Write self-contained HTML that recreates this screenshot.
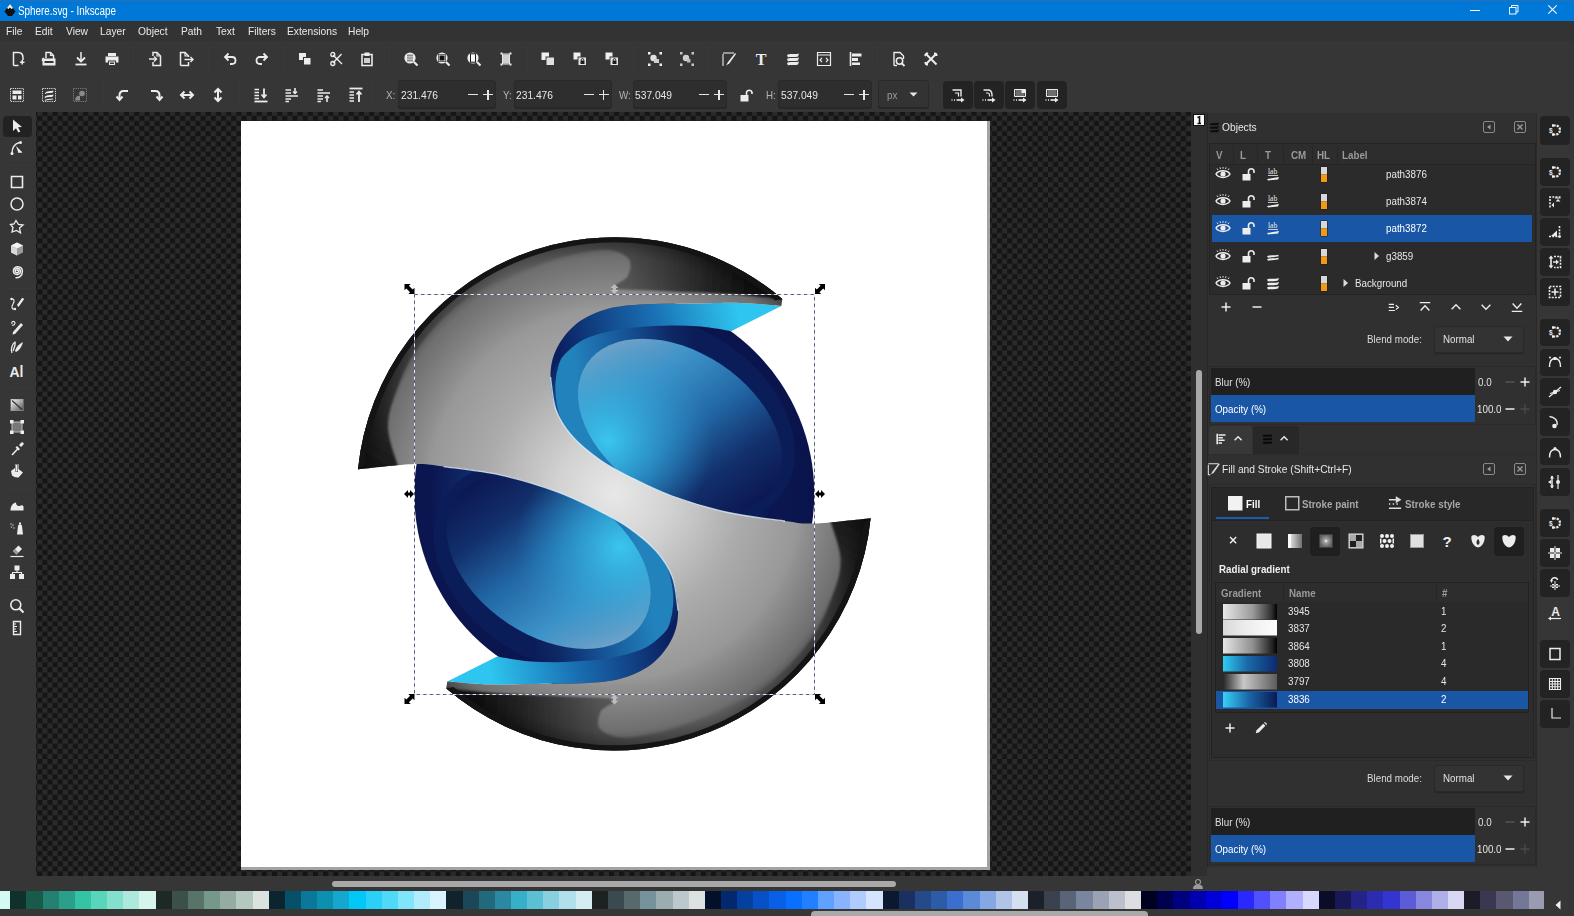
<!DOCTYPE html>
<html><head><meta charset="utf-8"><style>
html,body{margin:0;padding:0;}
body{width:1574px;height:916px;overflow:hidden;position:relative;background:#363636;font-family:"Liberation Sans",sans-serif;}
body div, body svg{position:absolute;box-sizing:border-box;}
svg{overflow:visible}
</style></head><body>
<div style="left:0px;top:0px;width:1574px;height:21px;background:#0078d7;"></div>
<div style="left:0px;top:0px;width:1574px;height:1px;background:#2a6fb6;"></div>
<svg style="left:3px;top:3px;" width="14" height="15" viewBox="0 0 14 15"><path d="M7 1 L12.5 8.5 L9 13 L5 13 L1.5 8.5 Z" fill="#111"/><path d="M7 1 L10 5 L8.5 6 L7 4.5 L5.5 6 L4 5 Z" fill="#f4f4f4"/></svg>
<div style="left:18px;top:0.50px;height:20px;line-height:20px;font-size:12px;color:#ffffff;font-weight:normal;white-space:nowrap;transform:scaleX(0.82);transform-origin:0 50%;">Sphere.svg - Inkscape</div>
<div style="left:1470px;top:10px;width:10px;height:1px;background:#ffffff;"></div>
<svg style="left:1509px;top:5px;" width="10" height="10" viewBox="0 0 10 10"><rect x="0.5" y="2.5" width="6.5" height="6.5" fill="none" stroke="#f4f8ff"/><path d="M2.5 2.5 V0.5 H9 V7 H7" fill="none" stroke="#f4f8ff"/></svg>
<svg style="left:1548px;top:5px;" width="9" height="9" viewBox="0 0 9 9"><path d="M0.3 0.3 L8.7 8.7 M8.7 0.3 L0.3 8.7" stroke="#f4f8ff" stroke-width="1.2"/></svg>
<div style="left:0px;top:21px;width:1574px;height:20px;background:#333333;"></div>
<div style="left:6px;top:20.50px;height:20px;line-height:20px;font-size:11.5px;color:#e8e8e8;font-weight:normal;white-space:nowrap;transform:scaleX(0.89);transform-origin:0 50%;">File</div>
<div style="left:35px;top:20.50px;height:20px;line-height:20px;font-size:11.5px;color:#e8e8e8;font-weight:normal;white-space:nowrap;transform:scaleX(0.89);transform-origin:0 50%;">Edit</div>
<div style="left:65.5px;top:20.50px;height:20px;line-height:20px;font-size:11.5px;color:#e8e8e8;font-weight:normal;white-space:nowrap;transform:scaleX(0.89);transform-origin:0 50%;">View</div>
<div style="left:100px;top:20.50px;height:20px;line-height:20px;font-size:11.5px;color:#e8e8e8;font-weight:normal;white-space:nowrap;transform:scaleX(0.89);transform-origin:0 50%;">Layer</div>
<div style="left:137.5px;top:20.50px;height:20px;line-height:20px;font-size:11.5px;color:#e8e8e8;font-weight:normal;white-space:nowrap;transform:scaleX(0.89);transform-origin:0 50%;">Object</div>
<div style="left:181px;top:20.50px;height:20px;line-height:20px;font-size:11.5px;color:#e8e8e8;font-weight:normal;white-space:nowrap;transform:scaleX(0.89);transform-origin:0 50%;">Path</div>
<div style="left:215.5px;top:20.50px;height:20px;line-height:20px;font-size:11.5px;color:#e8e8e8;font-weight:normal;white-space:nowrap;transform:scaleX(0.89);transform-origin:0 50%;">Text</div>
<div style="left:247.5px;top:20.50px;height:20px;line-height:20px;font-size:11.5px;color:#e8e8e8;font-weight:normal;white-space:nowrap;transform:scaleX(0.89);transform-origin:0 50%;">Filters</div>
<div style="left:287px;top:20.50px;height:20px;line-height:20px;font-size:11.5px;color:#e8e8e8;font-weight:normal;white-space:nowrap;transform:scaleX(0.89);transform-origin:0 50%;">Extensions</div>
<div style="left:348px;top:20.50px;height:20px;line-height:20px;font-size:11.5px;color:#e8e8e8;font-weight:normal;white-space:nowrap;transform:scaleX(0.89);transform-origin:0 50%;">Help</div>
<div style="left:0px;top:41px;width:1574px;height:71px;background:#363636;"></div>
<div style="left:0px;top:112px;width:36px;height:764px;background:#363636;"></div>
<svg style="left:36px;top:112px" width="1155" height="764" viewBox="36 112 1155 764"><defs><pattern id="chk" x="37.2" y="115.8" width="10.21" height="10.21" patternUnits="userSpaceOnUse"><rect width="10.21" height="10.21" fill="#151515"/><rect x="5.105" y="0" width="5.105" height="5.105" fill="#2a2a2a"/><rect x="0" y="5.105" width="5.105" height="5.105" fill="#2a2a2a"/></pattern></defs><rect x="36" y="112" width="1155" height="764" fill="url(#chk)"/></svg>
<div style="left:241px;top:121px;width:749px;height:749px;background:#ffffff;border-right:3px solid #a3a3a3;border-bottom:3px solid #a3a3a3;"></div>
<svg style="left:0px;top:0px" width="1574" height="916" viewBox="0 0 1574 916"><defs><clipPath id="cvclip"><rect x="36" y="112" width="1155" height="764"/></clipPath><clipPath id="sph"><circle cx="614.3" cy="493.8" r="200.0"/></clipPath><radialGradient id="gSph" gradientUnits="userSpaceOnUse" cx="600" cy="500" r="250"><stop offset="0" stop-color="#3fc6ee"/><stop offset="0.18" stop-color="#2aa2d6"/><stop offset="0.36" stop-color="#1b62a2"/><stop offset="0.52" stop-color="#0f2c6c"/><stop offset="0.68" stop-color="#0b1650"/><stop offset="1" stop-color="#0a1248"/></radialGradient><radialGradient id="gGray" gradientUnits="userSpaceOnUse" cx="614.3" cy="493.8" r="258.0"><stop offset="0" stop-color="#e8e8e8"/><stop offset="0.22" stop-color="#d2d2d2"/><stop offset="0.5" stop-color="#ababab"/><stop offset="0.75" stop-color="#959595"/><stop offset="1" stop-color="#8a8a8a"/></radialGradient><radialGradient id="gCap" gradientUnits="userSpaceOnUse" cx="500" cy="262" r="300"><stop offset="0" stop-color="#8a8a8a"/><stop offset="0.45" stop-color="#5a5a5a"/><stop offset="0.7" stop-color="#2a2a2a"/><stop offset="0.85" stop-color="#151515"/><stop offset="1" stop-color="#0a0a0a"/></radialGradient><linearGradient id="gTip" gradientUnits="userSpaceOnUse" x1="358" y1="470" x2="430" y2="430"><stop offset="0" stop-color="#0a0a0a"/><stop offset="0.6" stop-color="#444" stop-opacity="0.6"/><stop offset="1" stop-color="#777" stop-opacity="0"/></linearGradient><linearGradient id="gLip" gradientUnits="userSpaceOnUse" x1="740" y1="320" x2="560" y2="360"><stop offset="0" stop-color="#2ec6f0"/><stop offset="0.45" stop-color="#1a70b4"/><stop offset="1" stop-color="#0a1f60"/></linearGradient><linearGradient id="gRing" gradientUnits="userSpaceOnUse" x1="552" y1="420" x2="640" y2="335"><stop offset="0" stop-color="#2282bc"/><stop offset="0.45" stop-color="#165496"/><stop offset="0.8" stop-color="#0e2a68"/><stop offset="1" stop-color="#0b1d58"/></linearGradient><linearGradient id="gInner" gradientUnits="userSpaceOnUse" x1="570" y1="370" x2="790" y2="450"><stop offset="0" stop-color="#84a8c8"/><stop offset="0.3" stop-color="#3c92c8"/><stop offset="0.55" stop-color="#2268a6"/><stop offset="0.78" stop-color="#12306c"/><stop offset="1" stop-color="#0b1650"/></linearGradient><radialGradient id="gInCy" gradientUnits="userSpaceOnUse" cx="628" cy="478" r="105"><stop offset="0" stop-color="#3ac6ee" stop-opacity="1"/><stop offset="0.5" stop-color="#30a8da" stop-opacity="0.55"/><stop offset="1" stop-color="#2a90c8" stop-opacity="0"/></radialGradient><radialGradient id="gHi" gradientUnits="userSpaceOnUse" cx="614" cy="494" r="120"><stop offset="0" stop-color="#ececec" stop-opacity="0.9"/><stop offset="1" stop-color="#d0d0d0" stop-opacity="0"/></radialGradient><radialGradient id="gDark" gradientUnits="userSpaceOnUse" cx="614.3" cy="493.8" r="258.0"><stop offset="0.72" stop-color="#000" stop-opacity="0"/><stop offset="0.92" stop-color="#000" stop-opacity="0.22"/><stop offset="1" stop-color="#000" stop-opacity="0.55"/></radialGradient><filter id="fblur" x="-10%" y="-10%" width="120%" height="120%"><feGaussianBlur stdDeviation="1.1"/></filter><clipPath id="grayclip"><path d="M358.0,469.4 A258.0,258.0 0 0 1 782.3,299.0 L781.3,306.0 C774.4,305.5 753.5,303.4 740.0,303.0 C726.5,302.6 716.7,303.2 700.0,303.5 C683.3,303.8 656.0,303.4 640.0,304.5 C624.0,305.6 614.8,306.6 604.0,310.0 C593.2,313.4 583.0,318.3 575.0,325.0 C567.0,331.7 560.1,341.3 556.0,350.0 C551.9,358.7 550.5,367.0 550.5,377.0 C550.5,387.0 552.4,400.2 556.0,410.0 C559.6,419.8 564.7,427.7 572.0,436.0 C579.3,444.3 590.3,453.2 600.0,460.0 C609.7,466.8 618.0,471.0 630.0,477.0 C642.0,483.0 655.7,490.1 672.0,496.0 C688.3,501.9 709.2,508.3 728.0,512.5 C746.8,516.7 770.7,519.2 785.0,521.0 C799.3,522.8 799.7,524.0 814.0,523.5 C828.3,523.0 861.2,519.1 870.6,518.2 A258.0,258.0 0 0 1 446.3,688.6 L447.3,681.6 C454.2,682.1 475.0,684.2 488.6,684.6 C502.1,685.0 511.9,684.4 528.6,684.1 C545.3,683.9 572.6,684.2 588.6,683.1 C604.6,682.0 613.8,681.0 624.6,677.6 C635.4,674.2 645.6,669.3 653.6,662.6 C661.6,655.9 668.5,646.3 672.6,637.6 C676.7,628.9 678.1,620.6 678.1,610.6 C678.1,600.6 676.2,587.4 672.6,577.6 C669.0,567.8 663.9,559.9 656.6,551.6 C649.3,543.3 638.3,534.4 628.6,527.6 C618.9,520.8 610.6,516.6 598.6,510.6 C586.6,504.6 572.9,497.5 556.6,491.6 C540.3,485.7 519.4,479.3 500.6,475.1 C481.8,470.9 457.9,468.4 443.6,466.6 C429.3,464.8 428.9,463.6 414.6,464.1 C400.3,464.6 367.4,468.5 358.0,469.4 Z"/></clipPath></defs><g clip-path="url(#cvclip)"><circle cx="614.3" cy="493.8" r="200.0" fill="url(#gSph)"/><g id="halfA"><g clip-path="url(#sph)"><ellipse cx="675" cy="420" rx="130" ry="92" transform="rotate(33.5 675 420)" fill="url(#gRing)"/><ellipse cx="680" cy="426" rx="112" ry="74" transform="rotate(33.5 680 426)" fill="url(#gInner)"/><ellipse cx="680" cy="426" rx="112" ry="74" transform="rotate(33.5 680 426)" fill="url(#gInCy)"/></g><path d="M731.5,331 L781.3,306 C774.4,305.5 753.5,303.4 740.0,303.0 C726.5,302.6 716.7,303.2 700.0,303.5 C683.3,303.8 656.0,303.4 640.0,304.5 C624.0,305.6 614.8,306.6 604.0,310.0 C593.2,313.4 583.0,318.3 575.0,325.0 C567.0,331.7 560.1,341.3 556.0,350.0 C551.9,358.7 551.4,372.5 550.5,377.0 C551.8,374.5 552.9,368.0 558.0,362.0 C563.1,356.0 571.5,346.3 581.0,341.0 C590.5,335.7 605.2,332.3 615.0,330.0 C624.8,327.7 630.8,327.8 640.0,327.0 C649.2,326.2 660.3,325.5 670.5,325.4 C680.7,325.3 690.8,325.5 701.0,326.4 C711.2,327.3 726.4,330.2 731.5,331.0 Z" fill="url(#gLip)"/></g><use href="#halfA" transform="rotate(180 614.3 493.8)"/><path d="M358.0,469.4 A258.0,258.0 0 0 1 782.3,299.0 L781.3,306.0 C774.4,305.5 753.5,303.4 740.0,303.0 C726.5,302.6 716.7,303.2 700.0,303.5 C683.3,303.8 656.0,303.4 640.0,304.5 C624.0,305.6 614.8,306.6 604.0,310.0 C593.2,313.4 583.0,318.3 575.0,325.0 C567.0,331.7 560.1,341.3 556.0,350.0 C551.9,358.7 550.5,367.0 550.5,377.0 C550.5,387.0 552.4,400.2 556.0,410.0 C559.6,419.8 564.7,427.7 572.0,436.0 C579.3,444.3 590.3,453.2 600.0,460.0 C609.7,466.8 618.0,471.0 630.0,477.0 C642.0,483.0 655.7,490.1 672.0,496.0 C688.3,501.9 709.2,508.3 728.0,512.5 C746.8,516.7 770.7,519.2 785.0,521.0 C799.3,522.8 799.7,524.0 814.0,523.5 C828.3,523.0 861.2,519.1 870.6,518.2 A258.0,258.0 0 0 1 446.3,688.6 L447.3,681.6 C454.2,682.1 475.0,684.2 488.6,684.6 C502.1,685.0 511.9,684.4 528.6,684.1 C545.3,683.9 572.6,684.2 588.6,683.1 C604.6,682.0 613.8,681.0 624.6,677.6 C635.4,674.2 645.6,669.3 653.6,662.6 C661.6,655.9 668.5,646.3 672.6,637.6 C676.7,628.9 678.1,620.6 678.1,610.6 C678.1,600.6 676.2,587.4 672.6,577.6 C669.0,567.8 663.9,559.9 656.6,551.6 C649.3,543.3 638.3,534.4 628.6,527.6 C618.9,520.8 610.6,516.6 598.6,510.6 C586.6,504.6 572.9,497.5 556.6,491.6 C540.3,485.7 519.4,479.3 500.6,475.1 C481.8,470.9 457.9,468.4 443.6,466.6 C429.3,464.8 428.9,463.6 414.6,464.1 C400.3,464.6 367.4,468.5 358.0,469.4 Z" fill="url(#gGray)"/><g id="hlA"><path d="M550.5,377.0 C551.4,382.5 552.4,400.2 556.0,410.0 C559.6,419.8 564.7,427.7 572.0,436.0 C579.3,444.3 590.3,453.2 600.0,460.0 C609.7,466.8 618.0,471.0 630.0,477.0 C642.0,483.0 655.7,490.1 672.0,496.0 C688.3,501.9 709.2,508.3 728.0,512.5 C746.8,516.7 775.5,519.6 785.0,521.0" fill="none" stroke="#eaf6ff" stroke-width="1.3" stroke-opacity="0.75"/></g><use href="#hlA" transform="rotate(180 614.3 493.8)"/><g clip-path="url(#grayclip)"><g id="halfB"><path d="M352.0,472.4 L349.5,468.6 A266.0,266.0 0 0 1 788.0,292.4 L788.3,303.0 L782.3,299.0 C779.4,298.7 775.4,297.9 765.0,297.0 C754.6,296.1 737.5,294.5 720.0,293.5 C702.5,292.5 677.5,291.9 660.0,291.0 C642.5,290.1 620.3,290.5 615.0,288.0 C609.7,285.5 625.8,281.0 628.0,276.0 C630.2,271.0 632.7,262.3 628.0,258.0 C623.3,253.7 614.7,249.0 600.0,250.0 C585.3,251.0 562.0,256.0 540.0,264.0 C518.0,272.0 488.0,284.5 468.0,298.0 C448.0,311.5 432.0,329.3 420.0,345.0 C408.0,360.7 401.3,378.2 396.0,392.0 C390.7,405.8 387.7,415.7 388.0,428.0 C388.3,440.3 396.3,459.7 398.0,466.0 L398.0,474.0 Z" fill="url(#gCap)" filter="url(#fblur)"/></g><use href="#halfB" transform="rotate(180 614.3 493.8)"/></g><path d="M358.0,469.4 A258.0,258.0 0 0 1 782.3,299.0 L781.3,306.0 C774.4,305.5 753.5,303.4 740.0,303.0 C726.5,302.6 716.7,303.2 700.0,303.5 C683.3,303.8 656.0,303.4 640.0,304.5 C624.0,305.6 614.8,306.6 604.0,310.0 C593.2,313.4 583.0,318.3 575.0,325.0 C567.0,331.7 560.1,341.3 556.0,350.0 C551.9,358.7 550.5,367.0 550.5,377.0 C550.5,387.0 552.4,400.2 556.0,410.0 C559.6,419.8 564.7,427.7 572.0,436.0 C579.3,444.3 590.3,453.2 600.0,460.0 C609.7,466.8 618.0,471.0 630.0,477.0 C642.0,483.0 655.7,490.1 672.0,496.0 C688.3,501.9 709.2,508.3 728.0,512.5 C746.8,516.7 770.7,519.2 785.0,521.0 C799.3,522.8 799.7,524.0 814.0,523.5 C828.3,523.0 861.2,519.1 870.6,518.2 A258.0,258.0 0 0 1 446.3,688.6 L447.3,681.6 C454.2,682.1 475.0,684.2 488.6,684.6 C502.1,685.0 511.9,684.4 528.6,684.1 C545.3,683.9 572.6,684.2 588.6,683.1 C604.6,682.0 613.8,681.0 624.6,677.6 C635.4,674.2 645.6,669.3 653.6,662.6 C661.6,655.9 668.5,646.3 672.6,637.6 C676.7,628.9 678.1,620.6 678.1,610.6 C678.1,600.6 676.2,587.4 672.6,577.6 C669.0,567.8 663.9,559.9 656.6,551.6 C649.3,543.3 638.3,534.4 628.6,527.6 C618.9,520.8 610.6,516.6 598.6,510.6 C586.6,504.6 572.9,497.5 556.6,491.6 C540.3,485.7 519.4,479.3 500.6,475.1 C481.8,470.9 457.9,468.4 443.6,466.6 C429.3,464.8 428.9,463.6 414.6,464.1 C400.3,464.6 367.4,468.5 358.0,469.4 Z" fill="url(#gDark)"/><g id="rimA"><path d="M358.0,469.4 A258.0,258.0 0 0 1 782.3,299.0 L775.2,300.5 A251.5,251.5 0 0 0 364.4,465.6 Z" fill="#141414"/></g><use href="#rimA" transform="rotate(180 614.3 493.8)"/></g></svg>
<div style="left:1191px;top:112px;width:16px;height:764px;background:#2f2f2f;"></div>
<svg style="left:1193px;top:114px;" width="12" height="12" viewBox="0 0 12 12"><rect x="0.5" y="0.5" width="11" height="11" fill="#fafafa" stroke="#111"/><path d="M4.5 3.5 L6.5 2.8 V9.5 M4.5 9.5 H8" stroke="#111" stroke-width="1.6" fill="none"/></svg>
<div style="left:1196px;top:370px;width:6px;height:264px;border-radius:3px;background:#a9a9a9"></div>
<svg style="left:0px;top:0px" width="1574" height="916" viewBox="0 0 1574 916"><rect x="414.5" y="294.5" width="400" height="400" fill="none" stroke="#e8e8f0" stroke-width="1"/><rect x="414.5" y="294.5" width="400" height="400" fill="none" stroke="#5a5a78" stroke-width="1" stroke-dasharray="3.3 3.3"/><path d="M0,0 L6.2,0 L4.4,1.8 L8.2,5.6 L10,3.8 L10,10 L3.8,10 L5.6,8.2 L1.8,4.4 L0,6.2 Z" transform="translate(404.5,284) rotate(0 0 0)" fill="#000"/><path d="M0,0 L6.2,0 L4.4,1.8 L8.2,5.6 L10,3.8 L10,10 L3.8,10 L5.6,8.2 L1.8,4.4 L0,6.2 Z" transform="translate(825,284) rotate(90 0 0)" fill="#000"/><path d="M0,0 L6.2,0 L4.4,1.8 L8.2,5.6 L10,3.8 L10,10 L3.8,10 L5.6,8.2 L1.8,4.4 L0,6.2 Z" transform="translate(825,704) rotate(180 0 0)" fill="#000"/><path d="M0,0 L6.2,0 L4.4,1.8 L8.2,5.6 L10,3.8 L10,10 L3.8,10 L5.6,8.2 L1.8,4.4 L0,6.2 Z" transform="translate(404.5,704) rotate(270 0 0)" fill="#000"/><path d="M0,0 L4,-4 L4,-1.5 L6,-1.5 L6,-4 L10,0 L6,4 L6,1.5 L4,1.5 L4,4 Z" transform="translate(404,494)" fill="#000"/><path d="M0,0 L4,-4 L4,-1.5 L6,-1.5 L6,-4 L10,0 L6,4 L6,1.5 L4,1.5 L4,4 Z" transform="translate(815,494)" fill="#000"/><path d="M0,0 L4,-4 L4,-1.5 L6,-1.5 L6,-4 L10,0 L6,4 L6,1.5 L4,1.5 L4,4 Z" transform="translate(614.5,284) rotate(90)" fill="#c8c8c8" opacity="0.85"/><path d="M0,0 L4,-4 L4,-1.5 L6,-1.5 L6,-4 L10,0 L6,4 L6,1.5 L4,1.5 L4,4 Z" transform="translate(614.5,694.5) rotate(90)" fill="#c8c8c8" opacity="0.85"/></svg>
<div style="left:0px;top:876px;width:1207px;height:14px;background:#363636;"></div>
<div style="left:332px;top:881px;width:564px;height:6px;border-radius:3px;background:#a9a9a9"></div>
<svg style="left:1192px;top:878px;" width="12" height="12" viewBox="0 0 12 12"><circle cx="6" cy="4" r="2.5" fill="none" stroke="#9a9a9a" stroke-width="1.2"/><path d="M1 11 C1 7 4 6.5 6 6.5 C8 6.5 11 7 11 11Z" fill="#9a9a9a"/></svg>
<div style="left:0px;top:890px;width:1574px;height:26px;background:#363636;"></div>
<svg style="left:0px;top:891px" width="1544" height="18" viewBox="0 0 1544 18" shape-rendering="crispEdges"><rect x="0.00" y="0" width="10.20" height="18" fill="#d4faf4"/><rect x="10.20" y="0" width="16.16" height="18" fill="#10302a"/><rect x="26.36" y="0" width="16.16" height="18" fill="#1a5a4a"/><rect x="42.51" y="0" width="16.16" height="18" fill="#248070"/><rect x="58.67" y="0" width="16.16" height="18" fill="#2aa08a"/><rect x="74.82" y="0" width="16.16" height="18" fill="#33c4a6"/><rect x="90.98" y="0" width="16.16" height="18" fill="#58d6bc"/><rect x="107.13" y="0" width="16.16" height="18" fill="#82e0cc"/><rect x="123.29" y="0" width="16.15" height="18" fill="#ace8dc"/><rect x="139.44" y="0" width="16.16" height="18" fill="#d4f4ec"/><rect x="155.59" y="0" width="16.16" height="18" fill="#1e2824"/><rect x="171.75" y="0" width="16.16" height="18" fill="#3a5048"/><rect x="187.91" y="0" width="16.16" height="18" fill="#587468"/><rect x="204.06" y="0" width="16.16" height="18" fill="#74988a"/><rect x="220.22" y="0" width="16.16" height="18" fill="#94aca2"/><rect x="236.37" y="0" width="16.16" height="18" fill="#b4c8c0"/><rect x="252.53" y="0" width="16.16" height="18" fill="#dce2e0"/><rect x="268.68" y="0" width="16.16" height="18" fill="#0a2430"/><rect x="284.83" y="0" width="16.16" height="18" fill="#07506a"/><rect x="300.99" y="0" width="16.15" height="18" fill="#0a7898"/><rect x="317.15" y="0" width="16.16" height="18" fill="#0c90b0"/><rect x="333.30" y="0" width="16.16" height="18" fill="#14a8d0"/><rect x="349.45" y="0" width="16.16" height="18" fill="#00c8f8"/><rect x="365.61" y="0" width="16.15" height="18" fill="#2ad0f8"/><rect x="381.77" y="0" width="16.16" height="18" fill="#50d8f8"/><rect x="397.92" y="0" width="16.16" height="18" fill="#80e4fa"/><rect x="414.07" y="0" width="16.16" height="18" fill="#b0ecfc"/><rect x="430.23" y="0" width="16.15" height="18" fill="#d8f4fe"/><rect x="446.39" y="0" width="16.16" height="18" fill="#10222a"/><rect x="462.54" y="0" width="16.16" height="18" fill="#1a4858"/><rect x="478.69" y="0" width="16.16" height="18" fill="#206a7c"/><rect x="494.85" y="0" width="16.15" height="18" fill="#2a88a2"/><rect x="511.01" y="0" width="16.16" height="18" fill="#36b0c8"/><rect x="527.16" y="0" width="16.15" height="18" fill="#5cc0d4"/><rect x="543.32" y="0" width="16.15" height="18" fill="#88d0e0"/><rect x="559.47" y="0" width="16.15" height="18" fill="#b0e0ec"/><rect x="575.63" y="0" width="16.15" height="18" fill="#d4ecf2"/><rect x="591.78" y="0" width="16.15" height="18" fill="#1c2222"/><rect x="607.94" y="0" width="16.15" height="18" fill="#3a4a4e"/><rect x="624.09" y="0" width="16.15" height="18" fill="#566a6c"/><rect x="640.25" y="0" width="16.15" height="18" fill="#76929a"/><rect x="656.40" y="0" width="16.15" height="18" fill="#9aaeb0"/><rect x="672.56" y="0" width="16.15" height="18" fill="#bcc8cc"/><rect x="688.71" y="0" width="16.15" height="18" fill="#dce2e2"/><rect x="704.87" y="0" width="16.15" height="18" fill="#02102a"/><rect x="721.02" y="0" width="16.15" height="18" fill="#022870"/><rect x="737.18" y="0" width="16.15" height="18" fill="#0440a0"/><rect x="753.33" y="0" width="16.15" height="18" fill="#0850c8"/><rect x="769.49" y="0" width="16.15" height="18" fill="#0860e8"/><rect x="785.64" y="0" width="16.15" height="18" fill="#0870ff"/><rect x="801.80" y="0" width="16.15" height="18" fill="#2080ff"/><rect x="817.95" y="0" width="16.15" height="18" fill="#60a0ff"/><rect x="834.11" y="0" width="16.15" height="18" fill="#88b4ff"/><rect x="850.26" y="0" width="16.15" height="18" fill="#b0ccff"/><rect x="866.42" y="0" width="16.15" height="18" fill="#d4e4ff"/><rect x="882.57" y="0" width="16.15" height="18" fill="#0c1830"/><rect x="898.73" y="0" width="16.15" height="18" fill="#1a3060"/><rect x="914.88" y="0" width="16.15" height="18" fill="#244a8a"/><rect x="931.04" y="0" width="16.15" height="18" fill="#2c5ca8"/><rect x="947.19" y="0" width="16.15" height="18" fill="#3a6ed0"/><rect x="963.35" y="0" width="16.15" height="18" fill="#5a8ad8"/><rect x="979.50" y="0" width="16.15" height="18" fill="#84a8e4"/><rect x="995.66" y="0" width="16.15" height="18" fill="#b0c4e8"/><rect x="1011.81" y="0" width="16.15" height="18" fill="#d4e0f0"/><rect x="1027.97" y="0" width="16.15" height="18" fill="#1c2028"/><rect x="1044.12" y="0" width="16.15" height="18" fill="#3a4250"/><rect x="1060.28" y="0" width="16.15" height="18" fill="#5a6478"/><rect x="1076.43" y="0" width="16.15" height="18" fill="#7a86a0"/><rect x="1092.59" y="0" width="16.15" height="18" fill="#9aa2b4"/><rect x="1108.74" y="0" width="16.15" height="18" fill="#bcc0cc"/><rect x="1124.90" y="0" width="16.15" height="18" fill="#dcdee2"/><rect x="1141.05" y="0" width="16.15" height="18" fill="#000020"/><rect x="1157.21" y="0" width="16.15" height="18" fill="#000050"/><rect x="1173.36" y="0" width="16.15" height="18" fill="#000080"/><rect x="1189.52" y="0" width="16.15" height="18" fill="#0000b0"/><rect x="1205.67" y="0" width="16.15" height="18" fill="#0000d8"/><rect x="1221.83" y="0" width="16.15" height="18" fill="#0000ff"/><rect x="1237.98" y="0" width="16.15" height="18" fill="#2828ff"/><rect x="1254.14" y="0" width="16.15" height="18" fill="#5050ff"/><rect x="1270.29" y="0" width="16.15" height="18" fill="#8080ff"/><rect x="1286.45" y="0" width="16.15" height="18" fill="#b0b0ff"/><rect x="1302.60" y="0" width="16.15" height="18" fill="#d8d8ff"/><rect x="1318.76" y="0" width="16.15" height="18" fill="#0c0c28"/><rect x="1334.91" y="0" width="16.15" height="18" fill="#181858"/><rect x="1351.07" y="0" width="16.15" height="18" fill="#242488"/><rect x="1367.22" y="0" width="16.15" height="18" fill="#2c2cb0"/><rect x="1383.38" y="0" width="16.15" height="18" fill="#3434d0"/><rect x="1399.53" y="0" width="16.15" height="18" fill="#5c5cd8"/><rect x="1415.69" y="0" width="16.15" height="18" fill="#8888e0"/><rect x="1431.84" y="0" width="16.15" height="18" fill="#b0b0e8"/><rect x="1448.00" y="0" width="16.15" height="18" fill="#d8d8f4"/><rect x="1464.15" y="0" width="16.15" height="18" fill="#1c1c28"/><rect x="1480.31" y="0" width="16.15" height="18" fill="#3a3850"/><rect x="1496.46" y="0" width="16.15" height="18" fill="#585870"/><rect x="1512.62" y="0" width="16.15" height="18" fill="#747898"/><rect x="1528.77" y="0" width="14.83" height="18" fill="#9a9ab0"/></svg>
<svg style="left:1553px;top:899px" width="10" height="12" viewBox="0 0 10 12"><path d="M7.5 1.5 L2.5 6 L7.5 10.5 Z" fill="#f0f0f0"/></svg>
<div style="left:811px;top:911px;width:337px;height:8px;border-radius:4px;background:#a9a9a9"></div>
<div style="left:1207px;top:112px;width:330px;height:764px;background:#363636;"></div>
<div style="left:1537px;top:112px;width:37px;height:778px;background:#363636;"></div>
<div style="left:1207px;top:113px;width:330px;height:754px;background:#303030;border-left:1px solid #262626;border-right:1px solid #2a2a2a;"></div>
<svg style="left:1208.0px;top:120.0px" width="14" height="14" viewBox="0 0 16 16"><path d="M2 4 L13 3 L11 6 L3 6 Z M2 8 L13 7 L11 10 L3 10 Z M2 12 L13 11 L11 14 L3 14Z" fill="#0c0c0c"/></svg>
<div style="left:1222px;top:116.50px;height:20px;line-height:20px;font-size:11.5px;color:#e8e8e8;font-weight:normal;white-space:nowrap;transform:scaleX(0.89);transform-origin:0 50%;">Objects</div>
<svg style="left:1483px;top:121px;" width="12" height="12" viewBox="0 0 12 12"><rect x="0.5" y="0.5" width="11" height="11" rx="1.5" fill="none" stroke="#8a8a8a"/><path d="M7.5 3.5 L4 6 L7.5 8.5Z" fill="#9a9a9a"/></svg>
<svg style="left:1514px;top:121px;" width="12" height="12" viewBox="0 0 12 12"><rect x="0.5" y="0.5" width="11" height="11" rx="1.5" fill="none" stroke="#8a8a8a"/><path d="M3.5 3.5 L8.5 8.5 M8.5 3.5 L3.5 8.5" stroke="#9a9a9a" stroke-width="1.4"/></svg>
<div style="left:1209px;top:143px;width:327px;height:152px;background:#2b2b2b;border:1px solid #232323;"></div>
<div style="left:1210px;top:144px;width:325px;height:21px;background:#2d2d2d;border-bottom:1px solid #262626;"></div>
<div style="left:1216px;top:145.00px;height:20px;line-height:20px;font-size:11px;color:#9a9a9a;font-weight:bold;white-space:nowrap;transform:scaleX(0.89);transform-origin:0 50%;">V</div>
<div style="left:1240px;top:145.00px;height:20px;line-height:20px;font-size:11px;color:#9a9a9a;font-weight:bold;white-space:nowrap;transform:scaleX(0.89);transform-origin:0 50%;">L</div>
<div style="left:1265px;top:145.00px;height:20px;line-height:20px;font-size:11px;color:#9a9a9a;font-weight:bold;white-space:nowrap;transform:scaleX(0.89);transform-origin:0 50%;">T</div>
<div style="left:1291px;top:145.00px;height:20px;line-height:20px;font-size:11px;color:#9a9a9a;font-weight:bold;white-space:nowrap;transform:scaleX(0.89);transform-origin:0 50%;">CM</div>
<div style="left:1317px;top:145.00px;height:20px;line-height:20px;font-size:11px;color:#9a9a9a;font-weight:bold;white-space:nowrap;transform:scaleX(0.89);transform-origin:0 50%;">HL</div>
<div style="left:1342px;top:145.00px;height:20px;line-height:20px;font-size:11px;color:#9a9a9a;font-weight:bold;white-space:nowrap;transform:scaleX(0.89);transform-origin:0 50%;">Label</div>
<div style="left:1233px;top:146px;width:1px;height:18px;background:#262626;"></div>
<div style="left:1257px;top:146px;width:1px;height:18px;background:#262626;"></div>
<div style="left:1283px;top:146px;width:1px;height:18px;background:#262626;"></div>
<div style="left:1312px;top:146px;width:1px;height:18px;background:#262626;"></div>
<div style="left:1337px;top:146px;width:1px;height:18px;background:#262626;"></div>
<div style="left:1212px;top:215px;width:320px;height:27px;background:#1a56a6;"></div>
<svg style="left:1215.0px;top:166.0px" width="16" height="16" viewBox="0 0 16 16"><path d="M1 8 C3.5 3.5 12.5 3.5 15 8 C12.5 12.5 3.5 12.5 1 8Z" fill="none" stroke="#ededed" stroke-width="1.5"/><circle cx="8" cy="8" r="2.6" fill="#ededed"/><path d="M3 4 L2 2.5 M5.5 3 L5 1.3 M8 2.7 V1 M10.5 3 L11 1.3 M13 4 L14 2.5" stroke="#ededed" stroke-width="0.9"/></svg>
<svg style="left:1240.0px;top:166.0px" width="16" height="16" viewBox="0 0 16 16"><rect x="2.5" y="8" width="8" height="6.5" fill="#ededed"/><path d="M8.5 8 V5 A2.8 2.8 0 0 1 14 5 V7" fill="none" stroke="#ededed" stroke-width="1.6"/></svg>
<svg style="left:1265.0px;top:166.0px" width="16" height="16" viewBox="0 0 16 16"><text x="3" y="8" font-size="7.5" font-family="Liberation Serif" fill="#ededed">lab</text><path d="M2 13 L14 11 L13 13.5 L3 14.5Z" fill="#ededed"/><path d="M3 9.5 H13" stroke="#ededed" stroke-width="0.8"/></svg>
<svg style="left:1320px;top:165.5px;" width="8" height="17" viewBox="0 0 8 17"><rect x="0.5" y="0.5" width="7" height="16" rx="1" fill="#1b1b1b"/><rect x="1" y="1" width="6" height="7.5" fill="#d8d8d8"/><rect x="1" y="8.5" width="6" height="7.5" fill="#f39a12"/></svg>
<div style="left:1386px;top:164.00px;height:20px;line-height:20px;font-size:11px;color:#e8e8e8;font-weight:normal;white-space:nowrap;transform:scaleX(0.89);transform-origin:0 50%;">path3876</div>
<svg style="left:1215.0px;top:193.0px" width="16" height="16" viewBox="0 0 16 16"><path d="M1 8 C3.5 3.5 12.5 3.5 15 8 C12.5 12.5 3.5 12.5 1 8Z" fill="none" stroke="#ededed" stroke-width="1.5"/><circle cx="8" cy="8" r="2.6" fill="#ededed"/><path d="M3 4 L2 2.5 M5.5 3 L5 1.3 M8 2.7 V1 M10.5 3 L11 1.3 M13 4 L14 2.5" stroke="#ededed" stroke-width="0.9"/></svg>
<svg style="left:1240.0px;top:193.0px" width="16" height="16" viewBox="0 0 16 16"><rect x="2.5" y="8" width="8" height="6.5" fill="#ededed"/><path d="M8.5 8 V5 A2.8 2.8 0 0 1 14 5 V7" fill="none" stroke="#ededed" stroke-width="1.6"/></svg>
<svg style="left:1265.0px;top:193.0px" width="16" height="16" viewBox="0 0 16 16"><text x="3" y="8" font-size="7.5" font-family="Liberation Serif" fill="#ededed">lab</text><path d="M2 13 L14 11 L13 13.5 L3 14.5Z" fill="#ededed"/><path d="M3 9.5 H13" stroke="#ededed" stroke-width="0.8"/></svg>
<svg style="left:1320px;top:192.5px;" width="8" height="17" viewBox="0 0 8 17"><rect x="0.5" y="0.5" width="7" height="16" rx="1" fill="#1b1b1b"/><rect x="1" y="1" width="6" height="7.5" fill="#d8d8d8"/><rect x="1" y="8.5" width="6" height="7.5" fill="#f39a12"/></svg>
<div style="left:1386px;top:191.00px;height:20px;line-height:20px;font-size:11px;color:#e8e8e8;font-weight:normal;white-space:nowrap;transform:scaleX(0.89);transform-origin:0 50%;">path3874</div>
<svg style="left:1215.0px;top:220.0px" width="16" height="16" viewBox="0 0 16 16"><path d="M1 8 C3.5 3.5 12.5 3.5 15 8 C12.5 12.5 3.5 12.5 1 8Z" fill="none" stroke="#ededed" stroke-width="1.5"/><circle cx="8" cy="8" r="2.6" fill="#ededed"/><path d="M3 4 L2 2.5 M5.5 3 L5 1.3 M8 2.7 V1 M10.5 3 L11 1.3 M13 4 L14 2.5" stroke="#ededed" stroke-width="0.9"/></svg>
<svg style="left:1240.0px;top:220.0px" width="16" height="16" viewBox="0 0 16 16"><rect x="2.5" y="8" width="8" height="6.5" fill="#ededed"/><path d="M8.5 8 V5 A2.8 2.8 0 0 1 14 5 V7" fill="none" stroke="#ededed" stroke-width="1.6"/></svg>
<svg style="left:1265.0px;top:220.0px" width="16" height="16" viewBox="0 0 16 16"><text x="3" y="8" font-size="7.5" font-family="Liberation Serif" fill="#ededed">lab</text><path d="M2 13 L14 11 L13 13.5 L3 14.5Z" fill="#ededed"/><path d="M3 9.5 H13" stroke="#ededed" stroke-width="0.8"/></svg>
<svg style="left:1320px;top:219.5px;" width="8" height="17" viewBox="0 0 8 17"><rect x="0.5" y="0.5" width="7" height="16" rx="1" fill="#1b1b1b"/><rect x="1" y="1" width="6" height="7.5" fill="#d8d8d8"/><rect x="1" y="8.5" width="6" height="7.5" fill="#f39a12"/></svg>
<div style="left:1386px;top:218.00px;height:20px;line-height:20px;font-size:11px;color:#ffffff;font-weight:normal;white-space:nowrap;transform:scaleX(0.89);transform-origin:0 50%;">path3872</div>
<svg style="left:1215.0px;top:248.0px" width="16" height="16" viewBox="0 0 16 16"><path d="M1 8 C3.5 3.5 12.5 3.5 15 8 C12.5 12.5 3.5 12.5 1 8Z" fill="none" stroke="#ededed" stroke-width="1.5"/><circle cx="8" cy="8" r="2.6" fill="#ededed"/><path d="M3 4 L2 2.5 M5.5 3 L5 1.3 M8 2.7 V1 M10.5 3 L11 1.3 M13 4 L14 2.5" stroke="#ededed" stroke-width="0.9"/></svg>
<svg style="left:1240.0px;top:248.0px" width="16" height="16" viewBox="0 0 16 16"><rect x="2.5" y="8" width="8" height="6.5" fill="#ededed"/><path d="M8.5 8 V5 A2.8 2.8 0 0 1 14 5 V7" fill="none" stroke="#ededed" stroke-width="1.6"/></svg>
<svg style="left:1265.0px;top:248.0px" width="16" height="16" viewBox="0 0 16 16"><path d="M2.5 9 C5 7.5 9 9 13.5 7.5 M2.5 12 C5 10.5 9 12 13.5 10.5" stroke="#ededed" stroke-width="1.8" fill="none"/></svg>
<svg style="left:1320px;top:247.5px;" width="8" height="17" viewBox="0 0 8 17"><rect x="0.5" y="0.5" width="7" height="16" rx="1" fill="#1b1b1b"/><rect x="1" y="1" width="6" height="7.5" fill="#d8d8d8"/><rect x="1" y="8.5" width="6" height="7.5" fill="#f39a12"/></svg>
<svg style="left:1373px;top:251px;" width="7" height="10" viewBox="0 0 7 10"><path d="M1.5 1 L6 5 L1.5 9Z" fill="#dcdcdc"/></svg>
<div style="left:1386px;top:246.00px;height:20px;line-height:20px;font-size:11px;color:#e8e8e8;font-weight:normal;white-space:nowrap;transform:scaleX(0.89);transform-origin:0 50%;">g3859</div>
<svg style="left:1215.0px;top:275.0px" width="16" height="16" viewBox="0 0 16 16"><path d="M1 8 C3.5 3.5 12.5 3.5 15 8 C12.5 12.5 3.5 12.5 1 8Z" fill="none" stroke="#ededed" stroke-width="1.5"/><circle cx="8" cy="8" r="2.6" fill="#ededed"/><path d="M3 4 L2 2.5 M5.5 3 L5 1.3 M8 2.7 V1 M10.5 3 L11 1.3 M13 4 L14 2.5" stroke="#ededed" stroke-width="0.9"/></svg>
<svg style="left:1240.0px;top:275.0px" width="16" height="16" viewBox="0 0 16 16"><rect x="2.5" y="8" width="8" height="6.5" fill="#ededed"/><path d="M8.5 8 V5 A2.8 2.8 0 0 1 14 5 V7" fill="none" stroke="#ededed" stroke-width="1.6"/></svg>
<svg style="left:1265.0px;top:275.0px" width="16" height="16" viewBox="0 0 16 16"><path d="M2 4.5 C5 3 9 4.5 14 3 L13 5.5 C9 7 5 5.5 3 6.5Z M2 8.5 C5 7 9 8.5 14 7 L13 9.5 C9 11 5 9.5 3 10.5Z M2 12.5 C5 11 9 12.5 14 11 L13 13.5 C9 15 5 13.5 3 14.5Z" fill="#ededed"/></svg>
<svg style="left:1320px;top:274.5px;" width="8" height="17" viewBox="0 0 8 17"><rect x="0.5" y="0.5" width="7" height="16" rx="1" fill="#1b1b1b"/><rect x="1" y="1" width="6" height="7.5" fill="#d8d8d8"/><rect x="1" y="8.5" width="6" height="7.5" fill="#f39a12"/></svg>
<svg style="left:1342px;top:278px;" width="7" height="10" viewBox="0 0 7 10"><path d="M1.5 1 L6 5 L1.5 9Z" fill="#dcdcdc"/></svg>
<div style="left:1355px;top:273.00px;height:20px;line-height:20px;font-size:11px;color:#e8e8e8;font-weight:normal;white-space:nowrap;transform:scaleX(0.89);transform-origin:0 50%;">Background</div>
<svg style="left:1221.0px;top:302.0px;" width="10" height="10" viewBox="0 0 10 10"><path d="M5.0 0.5 V9.5 M0.5 5.0 H9.5" stroke="#ececec" stroke-width="1.5"/></svg>
<svg style="left:1252.0px;top:302.0px;" width="10" height="10" viewBox="0 0 10 10"><path d="M0.5 5.0 H9.5" stroke="#ececec" stroke-width="1.5"/></svg>
<svg style="left:1387.0px;top:300.0px" width="14" height="14" viewBox="0 0 16 16"><path d="M2 5 H8 M2 8.5 H8 M2 12 H9 M10 6 L13 8.5 L10 11" stroke="#ececec" stroke-width="1.4" fill="none"/></svg>
<svg style="left:1418.0px;top:300.0px" width="14" height="14" viewBox="0 0 16 16"><path d="M2 3 H14 M3 12 L8 6.5 L13 12" stroke="#ececec" stroke-width="1.6" fill="none"/></svg>
<svg style="left:1449.0px;top:300.0px" width="14" height="14" viewBox="0 0 16 16"><path d="M3 10.5 L8 5.5 L13 10.5" stroke="#ececec" stroke-width="1.6" fill="none"/></svg>
<svg style="left:1479.0px;top:300.0px" width="14" height="14" viewBox="0 0 16 16"><path d="M3 5.5 L8 10.5 L13 5.5" stroke="#ececec" stroke-width="1.6" fill="none"/></svg>
<svg style="left:1510.0px;top:300.0px" width="14" height="14" viewBox="0 0 16 16"><path d="M2 13 H14 M3 4 L8 9.5 L13 4" stroke="#ececec" stroke-width="1.6" fill="none"/></svg>
<div style="left:1367px;top:328.50px;height:20px;line-height:20px;font-size:11px;color:#dcdcdc;font-weight:normal;white-space:nowrap;transform:scaleX(0.89);transform-origin:0 50%;">Blend mode:</div>
<div style="left:1434px;top:325.5px;width:90px;height:27px;background:#333333;border:1px solid #292929;border-radius:3px;box-shadow:0 1px 1px #262626;"></div>
<div style="left:1443px;top:328.50px;height:20px;line-height:20px;font-size:11px;color:#e0e0e0;font-weight:normal;white-space:nowrap;transform:scaleX(0.89);transform-origin:0 50%;">Normal</div>
<svg style="left:1503px;top:335.5px;" width="10" height="6" viewBox="0 0 10 6"><path d="M0.5 0.5 H9.5 L5 5.5Z" fill="#e6e6e6"/></svg>
<div style="left:1209px;top:366px;width:327px;height:59px;background:#303030;border:1px solid #2a2a2a;"></div>
<div style="left:1211px;top:368px;width:264px;height:27px;background:#202020;"></div>
<div style="left:1211px;top:395px;width:264px;height:27px;background:#1a56a6;"></div>
<div style="left:1215px;top:371.50px;height:20px;line-height:20px;font-size:11px;color:#e0e0e0;font-weight:normal;white-space:nowrap;transform:scaleX(0.89);transform-origin:0 50%;">Blur (%)</div>
<div style="left:1215px;top:398.50px;height:20px;line-height:20px;font-size:11px;color:#ffffff;font-weight:normal;white-space:nowrap;transform:scaleX(0.89);transform-origin:0 50%;">Opacity (%)</div>
<div style="left:1478px;top:371.50px;height:20px;line-height:20px;font-size:11px;color:#e0e0e0;font-weight:normal;white-space:nowrap;transform:scaleX(0.89);transform-origin:0 50%;">0.0</div>
<div style="left:1477px;top:398.50px;height:20px;line-height:20px;font-size:11px;color:#e6e6e6;font-weight:normal;white-space:nowrap;transform:scaleX(0.89);transform-origin:0 50%;">100.0</div>
<svg style="left:1505.0px;top:376.5px;" width="10" height="10" viewBox="0 0 10 10"><path d="M0.5 5.0 H9.5" stroke="#555555" stroke-width="1.5"/></svg>
<svg style="left:1520.0px;top:376.5px;" width="10" height="10" viewBox="0 0 10 10"><path d="M5.0 0.5 V9.5 M0.5 5.0 H9.5" stroke="#ececec" stroke-width="1.5"/></svg>
<svg style="left:1505.0px;top:403.5px;" width="10" height="10" viewBox="0 0 10 10"><path d="M0.5 5.0 H9.5" stroke="#ececec" stroke-width="1.5"/></svg>
<svg style="left:1520.0px;top:403.5px;" width="10" height="10" viewBox="0 0 10 10"><path d="M5.0 0.5 V9.5 M0.5 5.0 H9.5" stroke="#4a4a4a" stroke-width="1.5"/></svg>
<div style="left:1209px;top:426px;width:43px;height:28px;background:#383838;border-radius:3px 3px 0 0;"></div>
<div style="left:1253px;top:426px;width:46px;height:28px;background:#282828;border-radius:3px 3px 0 0;"></div>
<svg style="left:1215.0px;top:432.0px" width="14" height="14" viewBox="0 0 16 16"><path d="M2.5 2 V14 M4 3.5 H12 M4 6.5 H9 M4 9.5 H11 M4 12.5 H8" stroke="#ececec" stroke-width="1.8" fill="none"/></svg>
<svg style="left:1231.5px;top:432.0px" width="14" height="14" viewBox="0 0 16 16"><path d="M3 9.5 L7 5.5 L11 9.5" stroke="#ececec" stroke-width="1.6" fill="none"/></svg>
<svg style="left:1261.0px;top:432.0px" width="14" height="14" viewBox="0 0 16 16"><path d="M2 3.5 C5 2.5 9 4 13 2.5 L12 5 C9 6 5 5 3 5.8Z M2 7.5 C5 6.5 9 8 13 6.5 L12 9 C9 10 5 9 3 9.8Z M2 11.5 C5 10.5 9 12 13 10.5 L12 13 C9 14 5 13 3 13.8Z" fill="#080808"/></svg>
<svg style="left:1277.5px;top:432.0px" width="14" height="14" viewBox="0 0 16 16"><path d="M3 9.5 L7 5.5 L11 9.5" stroke="#ececec" stroke-width="1.6" fill="none"/></svg>
<div style="left:1207px;top:454px;width:330px;height:1px;background:#2c2c2c;"></div>
<svg style="left:1207.0px;top:462.0px" width="14" height="14" viewBox="0 0 16 16"><path d="M1.5 3 V14.5 H4 M1.5 2 H13" stroke="#e0e0e0" stroke-width="1.2" fill="none"/><path d="M13.5 1.5 L6 11 L4.5 14 L7.5 12.5 L14.5 2.5Z" fill="#e0e0e0"/></svg>
<div style="left:1222px;top:459.00px;height:20px;line-height:20px;font-size:11.5px;color:#e6e6e6;font-weight:normal;white-space:nowrap;transform:scaleX(0.89);transform-origin:0 50%;">Fill and Stroke (Shift+Ctrl+F)</div>
<svg style="left:1483px;top:463px;" width="12" height="12" viewBox="0 0 12 12"><rect x="0.5" y="0.5" width="11" height="11" rx="1.5" fill="none" stroke="#8a8a8a"/><path d="M7.5 3.5 L4 6 L7.5 8.5Z" fill="#9a9a9a"/></svg>
<svg style="left:1514px;top:463px;" width="12" height="12" viewBox="0 0 12 12"><rect x="0.5" y="0.5" width="11" height="11" rx="1.5" fill="none" stroke="#8a8a8a"/><path d="M3.5 3.5 L8.5 8.5 M8.5 3.5 L3.5 8.5" stroke="#9a9a9a" stroke-width="1.4"/></svg>
<div style="left:1209px;top:484px;width:327px;height:277px;background:#303030;border:1px solid #2a2a2a;"></div>
<div style="left:1211px;top:487px;width:323px;height:271px;background:#2d2d2d;border:1px solid #232323;"></div>
<div style="left:1212px;top:488px;width:321px;height:33px;background:#282828;border-bottom:1px solid #232323;"></div>
<svg style="left:1228px;top:496px;" width="15" height="15" viewBox="0 0 15 15"><rect x="0" y="0" width="14.5" height="14.5" fill="#f2f2f2"/></svg>
<div style="left:1245.5px;top:493.50px;height:20px;line-height:20px;font-size:11px;color:#ffffff;font-weight:bold;white-space:nowrap;transform:scaleX(0.89);transform-origin:0 50%;">Fill</div>
<div style="left:1216px;top:517px;width:53px;height:2px;background:#1c5bb0;"></div>
<svg style="left:1285px;top:496px;" width="15" height="15" viewBox="0 0 15 15"><rect x="0.75" y="0.75" width="13" height="13" fill="none" stroke="#bdbdbd" stroke-width="1.5"/></svg>
<div style="left:1302px;top:493.50px;height:20px;line-height:20px;font-size:11px;color:#a8a8a8;font-weight:bold;white-space:nowrap;transform:scaleX(0.89);transform-origin:0 50%;">Stroke paint</div>
<svg style="left:1387.5px;top:496.0px" width="15" height="15" viewBox="0 0 16 16"><path d="M1 4 H11 M9 1.5 L13 4 L9 6.5Z" stroke="#dddddd" stroke-width="1.4" fill="#dddddd"/><path d="M1 8.5 H2.5 M5 8.5 H6.5 M9 8.5 H10.5 M1 13 H14" stroke="#dddddd" stroke-width="1.6"/></svg>
<div style="left:1405px;top:493.50px;height:20px;line-height:20px;font-size:11px;color:#a8a8a8;font-weight:bold;white-space:nowrap;transform:scaleX(0.89);transform-origin:0 50%;">Stroke style</div>
<div style="left:1310px;top:527px;width:30px;height:29px;background:#1f1f1f;border-radius:4px;"></div>
<div style="left:1494px;top:527px;width:30px;height:29px;background:#1f1f1f;border-radius:4px;"></div>
<svg style="left:1226.5px;top:534.0px" width="14" height="14" viewBox="0 0 16 16"><path d="M3.5 3.5 L10.5 10.5 M10.5 3.5 L3.5 10.5" stroke="#f0f0f0" stroke-width="1.6"/></svg>
<svg style="left:1256.0px;top:533.0px" width="16" height="16" viewBox="0 0 16 16"><rect x="1" y="1" width="14" height="14" fill="#e8e8e8" stroke="#f4f4f4"/></svg>
<svg style="left:1287.0px;top:533.0px" width="16" height="16" viewBox="0 0 16 16"><defs><linearGradient id="lgi"><stop offset="0" stop-color="#f4f4f4"/><stop offset="1" stop-color="#707070"/></linearGradient></defs><rect x="1" y="1" width="14" height="14" fill="url(#lgi)"/><rect x="1" y="1" width="3" height="14" fill="#fafafa"/></svg>
<svg style="left:1317.5px;top:533.0px" width="16" height="16" viewBox="0 0 16 16"><defs><radialGradient id="rgi"><stop offset="0" stop-color="#ffffff"/><stop offset="0.3" stop-color="#a0a0a0"/><stop offset="1" stop-color="#606060"/></radialGradient></defs><rect x="1.5" y="1.5" width="13" height="13" fill="url(#rgi)"/></svg>
<svg style="left:1348.0px;top:533.0px" width="16" height="16" viewBox="0 0 16 16"><rect x="1" y="1" width="14" height="14" fill="#aaaaaa" stroke="#e0e0e0"/><rect x="8" y="2" width="6" height="6" fill="#202020"/><rect x="2" y="8" width="6" height="6" fill="#202020"/></svg>
<svg style="left:1379.0px;top:533.0px" width="16" height="16" viewBox="0 0 16 16"><g fill="#f0f0f0"><circle cx="3" cy="3" r="2"/><circle cx="8" cy="3" r="2"/><circle cx="13" cy="3" r="2"/><circle cx="5.5" cy="8" r="2"/><circle cx="10.5" cy="8" r="2"/><circle cx="3" cy="13" r="2"/><circle cx="8" cy="13" r="2"/><circle cx="13" cy="13" r="2"/><rect x="1" y="5.5" width="1.5" height="5"/><rect x="13.5" y="5.5" width="1.5" height="5"/></g></svg>
<svg style="left:1409.0px;top:533.0px" width="16" height="16" viewBox="0 0 16 16"><rect x="1.5" y="1.5" width="13" height="13" fill="#e0e0e0" stroke="#9a9a9a"/></svg>
<svg style="left:1439.0px;top:533.0px" width="16" height="16" viewBox="0 0 16 16"><text x="8" y="14" text-anchor="middle" font-size="15" font-weight="bold" font-family="Liberation Sans" fill="#f0f0f0">?</text></svg>
<svg style="left:1470.0px;top:533.0px" width="16" height="16" viewBox="0 0 16 16"><path d="M1.5 3 C4 1 6 2 8 4 C10 2 12 1 14.5 3 C15.5 8 12 14 8 14.5 C4 14 0.5 8 1.5 3Z" fill="#ececec"/><path d="M8 6 C6 8 6 11 8 12 C10 11 10 8 8 6Z" fill="#2d2d2d"/></svg>
<svg style="left:1501.0px;top:533.0px" width="16" height="16" viewBox="0 0 16 16"><path d="M1.5 3 C4 1 6 2 8 4 C10 2 12 1 14.5 3 C15.5 8 12 14 8 14.5 C4 14 0.5 8 1.5 3Z" fill="#ececec"/></svg>
<div style="left:1219px;top:559.00px;height:20px;line-height:20px;font-size:11px;color:#f0f0f0;font-weight:bold;white-space:nowrap;transform:scaleX(0.89);transform-origin:0 50%;">Radial gradient</div>
<div style="left:1215px;top:582px;width:314px;height:131px;background:#2a2a2a;border:1px solid #222;"></div>
<div style="left:1216px;top:583px;width:312px;height:19px;background:#2d2d2d;"></div>
<div style="left:1221px;top:583.00px;height:20px;line-height:20px;font-size:11px;color:#9a9a9a;font-weight:bold;white-space:nowrap;transform:scaleX(0.89);transform-origin:0 50%;">Gradient</div>
<div style="left:1289px;top:583.00px;height:20px;line-height:20px;font-size:11px;color:#9a9a9a;font-weight:bold;white-space:nowrap;transform:scaleX(0.89);transform-origin:0 50%;">Name</div>
<div style="left:1442px;top:583.00px;height:20px;line-height:20px;font-size:11px;color:#9a9a9a;font-weight:bold;white-space:nowrap;transform:scaleX(0.89);transform-origin:0 50%;">#</div>
<div style="left:1283px;top:585px;width:1px;height:16px;background:#262626;"></div>
<div style="left:1436px;top:585px;width:1px;height:16px;background:#262626;"></div>
<div style="left:1216px;top:691px;width:312px;height:18px;background:#1a56a6;"></div>
<svg style="left:1223px;top:603.7px;" width="54" height="15.5" viewBox="0 0 54 15.5"><defs><linearGradient id="gl0"><stop offset="0" stop-color="#e8e8e8"/><stop offset="0.55" stop-color="#9a9a9a"/><stop offset="0.9" stop-color="#303030"/><stop offset="1" stop-color="#000"/></linearGradient></defs><rect width="54" height="15.5" fill="url(#gl0)"/></svg>
<div style="left:1288px;top:601.45px;height:20px;line-height:20px;font-size:11px;color:#e6e6e6;font-weight:normal;white-space:nowrap;transform:scaleX(0.89);transform-origin:0 50%;">3945</div>
<div style="left:1441px;top:601.45px;height:20px;line-height:20px;font-size:11px;color:#e6e6e6;font-weight:normal;white-space:nowrap;transform:scaleX(0.89);transform-origin:0 50%;">1</div>
<svg style="left:1223px;top:620.2px;" width="54" height="15.5" viewBox="0 0 54 15.5"><defs><linearGradient id="gl1"><stop offset="0" stop-color="#d8d8d8"/><stop offset="0.4" stop-color="#ececec"/><stop offset="1" stop-color="#fcfcfc"/></linearGradient></defs><rect width="54" height="15.5" fill="url(#gl1)"/></svg>
<div style="left:1288px;top:617.95px;height:20px;line-height:20px;font-size:11px;color:#e6e6e6;font-weight:normal;white-space:nowrap;transform:scaleX(0.89);transform-origin:0 50%;">3837</div>
<div style="left:1441px;top:617.95px;height:20px;line-height:20px;font-size:11px;color:#e6e6e6;font-weight:normal;white-space:nowrap;transform:scaleX(0.89);transform-origin:0 50%;">2</div>
<svg style="left:1223px;top:638px;" width="54" height="15.5" viewBox="0 0 54 15.5"><defs><linearGradient id="gl2"><stop offset="0" stop-color="#e6e6e6"/><stop offset="0.55" stop-color="#909090"/><stop offset="0.92" stop-color="#202020"/><stop offset="1" stop-color="#000"/></linearGradient></defs><rect width="54" height="15.5" fill="url(#gl2)"/></svg>
<div style="left:1288px;top:635.75px;height:20px;line-height:20px;font-size:11px;color:#e6e6e6;font-weight:normal;white-space:nowrap;transform:scaleX(0.89);transform-origin:0 50%;">3864</div>
<div style="left:1441px;top:635.75px;height:20px;line-height:20px;font-size:11px;color:#e6e6e6;font-weight:normal;white-space:nowrap;transform:scaleX(0.89);transform-origin:0 50%;">1</div>
<svg style="left:1223px;top:655.7px;" width="54" height="15.5" viewBox="0 0 54 15.5"><defs><linearGradient id="gl3"><stop offset="0" stop-color="#2ecaf2"/><stop offset="0.45" stop-color="#1a6aa8"/><stop offset="1" stop-color="#0c2a70"/></linearGradient></defs><rect width="54" height="15.5" fill="url(#gl3)"/></svg>
<div style="left:1288px;top:653.45px;height:20px;line-height:20px;font-size:11px;color:#e6e6e6;font-weight:normal;white-space:nowrap;transform:scaleX(0.89);transform-origin:0 50%;">3808</div>
<div style="left:1441px;top:653.45px;height:20px;line-height:20px;font-size:11px;color:#e6e6e6;font-weight:normal;white-space:nowrap;transform:scaleX(0.89);transform-origin:0 50%;">4</div>
<svg style="left:1223px;top:673.6px;" width="54" height="15.5" viewBox="0 0 54 15.5"><defs><linearGradient id="gl4"><stop offset="0" stop-color="#262626"/><stop offset="0.38" stop-color="#c8c8c8"/><stop offset="1" stop-color="#5c5c5c"/></linearGradient></defs><rect width="54" height="15.5" fill="url(#gl4)"/></svg>
<div style="left:1288px;top:671.35px;height:20px;line-height:20px;font-size:11px;color:#e6e6e6;font-weight:normal;white-space:nowrap;transform:scaleX(0.89);transform-origin:0 50%;">3797</div>
<div style="left:1441px;top:671.35px;height:20px;line-height:20px;font-size:11px;color:#e6e6e6;font-weight:normal;white-space:nowrap;transform:scaleX(0.89);transform-origin:0 50%;">4</div>
<svg style="left:1223px;top:691.6px;" width="54" height="15.5" viewBox="0 0 54 15.5"><defs><linearGradient id="gl5"><stop offset="0" stop-color="#36d0f6"/><stop offset="0.5" stop-color="#1a62a4"/><stop offset="1" stop-color="#0a1a52"/></linearGradient></defs><rect width="54" height="15.5" fill="url(#gl5)"/></svg>
<div style="left:1288px;top:689.35px;height:20px;line-height:20px;font-size:11px;color:#ffffff;font-weight:normal;white-space:nowrap;transform:scaleX(0.89);transform-origin:0 50%;">3836</div>
<div style="left:1441px;top:689.35px;height:20px;line-height:20px;font-size:11px;color:#ffffff;font-weight:normal;white-space:nowrap;transform:scaleX(0.89);transform-origin:0 50%;">2</div>
<svg style="left:1225.0px;top:722.5px;" width="10" height="10" viewBox="0 0 10 10"><path d="M5.0 0.5 V9.5 M0.5 5.0 H9.5" stroke="#ececec" stroke-width="1.5"/></svg>
<svg style="left:1254.0px;top:720.5px" width="14" height="14" viewBox="0 0 16 16"><path d="M2 14 L3 10.5 L10.5 3 L13 5.5 L5.5 13Z" fill="#ececec"/><path d="M11.5 2 L12.5 1 L15 3.5 L14 4.5Z" fill="#ececec"/></svg>
<div style="left:1367px;top:767.50px;height:20px;line-height:20px;font-size:11px;color:#dcdcdc;font-weight:normal;white-space:nowrap;transform:scaleX(0.89);transform-origin:0 50%;">Blend mode:</div>
<div style="left:1434px;top:764.5px;width:90px;height:27px;background:#333333;border:1px solid #292929;border-radius:3px;box-shadow:0 1px 1px #262626;"></div>
<div style="left:1443px;top:767.50px;height:20px;line-height:20px;font-size:11px;color:#e0e0e0;font-weight:normal;white-space:nowrap;transform:scaleX(0.89);transform-origin:0 50%;">Normal</div>
<svg style="left:1503px;top:774.5px;" width="10" height="6" viewBox="0 0 10 6"><path d="M0.5 0.5 H9.5 L5 5.5Z" fill="#e6e6e6"/></svg>
<div style="left:1209px;top:806px;width:327px;height:59px;background:#303030;border:1px solid #2a2a2a;"></div>
<div style="left:1211px;top:808px;width:264px;height:27px;background:#202020;"></div>
<div style="left:1211px;top:835px;width:264px;height:27px;background:#1a56a6;"></div>
<div style="left:1215px;top:811.50px;height:20px;line-height:20px;font-size:11px;color:#e0e0e0;font-weight:normal;white-space:nowrap;transform:scaleX(0.89);transform-origin:0 50%;">Blur (%)</div>
<div style="left:1215px;top:838.50px;height:20px;line-height:20px;font-size:11px;color:#ffffff;font-weight:normal;white-space:nowrap;transform:scaleX(0.89);transform-origin:0 50%;">Opacity (%)</div>
<div style="left:1478px;top:811.50px;height:20px;line-height:20px;font-size:11px;color:#e0e0e0;font-weight:normal;white-space:nowrap;transform:scaleX(0.89);transform-origin:0 50%;">0.0</div>
<div style="left:1477px;top:838.50px;height:20px;line-height:20px;font-size:11px;color:#e6e6e6;font-weight:normal;white-space:nowrap;transform:scaleX(0.89);transform-origin:0 50%;">100.0</div>
<svg style="left:1505.0px;top:816.5px;" width="10" height="10" viewBox="0 0 10 10"><path d="M0.5 5.0 H9.5" stroke="#555555" stroke-width="1.5"/></svg>
<svg style="left:1520.0px;top:816.5px;" width="10" height="10" viewBox="0 0 10 10"><path d="M5.0 0.5 V9.5 M0.5 5.0 H9.5" stroke="#ececec" stroke-width="1.5"/></svg>
<svg style="left:1505.0px;top:843.5px;" width="10" height="10" viewBox="0 0 10 10"><path d="M0.5 5.0 H9.5" stroke="#ececec" stroke-width="1.5"/></svg>
<svg style="left:1520.0px;top:843.5px;" width="10" height="10" viewBox="0 0 10 10"><path d="M5.0 0.5 V9.5 M0.5 5.0 H9.5" stroke="#4a4a4a" stroke-width="1.5"/></svg>
<div style="left:133px;top:47px;width:1px;height:24px;background:#393939;"></div>
<div style="left:208px;top:47px;width:1px;height:24px;background:#393939;"></div>
<div style="left:283px;top:47px;width:1px;height:24px;background:#393939;"></div>
<div style="left:389px;top:47px;width:1px;height:24px;background:#393939;"></div>
<div style="left:527px;top:47px;width:1px;height:24px;background:#393939;"></div>
<div style="left:633px;top:47px;width:1px;height:24px;background:#393939;"></div>
<div style="left:708px;top:47px;width:1px;height:24px;background:#393939;"></div>
<div style="left:877px;top:47px;width:1px;height:24px;background:#393939;"></div>
<div style="left:103px;top:82px;width:1px;height:24px;background:#393939;"></div>
<div style="left:239px;top:82px;width:1px;height:24px;background:#393939;"></div>
<div style="left:372px;top:82px;width:1px;height:24px;background:#393939;"></div>
<svg style="left:10.4px;top:51.0px" width="16" height="16" viewBox="0 0 16 16"><path d="M3.5 14.5 V1.5 H8.5 C12 1.5 13 4 13 7 V9" fill="none" stroke="#ececec" stroke-width="1.5" stroke-linecap="butt" stroke-linejoin="miter"/><path d="M10 10.5 H11.5 V9 H13 V10.5 H14.5 V12 H13 V13.5 H11.5 V12 H10Z" fill="#ececec"/><path d="M3.5 14.5 H8.5" fill="none" stroke="#ececec" stroke-width="1.5" stroke-linecap="butt" stroke-linejoin="miter"/></svg>
<svg style="left:40.9px;top:51.0px" width="16" height="16" viewBox="0 0 16 16"><path d="M5 7 V1.5 H9.5 L12.5 4.5 V8" fill="none" stroke="#ececec" stroke-width="1.5" stroke-linecap="butt" stroke-linejoin="miter"/><path d="M9.5 1.5 V4.5 H12.5" fill="none" stroke="#ececec" stroke-width="1.2" stroke-linecap="butt" stroke-linejoin="miter"/><path d="M1.5 7.5 H14.5 V14.5 H1.5Z" fill="#ececec"/><path d="M3.5 10 H12.5 V12 H3.5Z" fill="#363636"/><path d="M1.5 10 C1 8 2 7 3 7" fill="none" stroke="#ececec" stroke-width="1.2" stroke-linecap="butt" stroke-linejoin="miter"/></svg>
<svg style="left:72.7px;top:51.0px" width="16" height="16" viewBox="0 0 16 16"><path d="M8 1 V10.5" fill="none" stroke="#ececec" stroke-width="1.5" stroke-linecap="butt" stroke-linejoin="miter"/><path d="M4 6.5 L8 10.5 L12 6.5" fill="none" stroke="#ececec" stroke-width="1.8" stroke-linecap="butt" stroke-linejoin="miter"/><path d="M2.5 13.5 H13.5" fill="none" stroke="#ececec" stroke-width="1.8" stroke-linecap="butt" stroke-linejoin="miter"/></svg>
<svg style="left:103.8px;top:51.0px" width="16" height="16" viewBox="0 0 16 16"><path d="M4 2 H12 V5 H4Z" fill="#ececec"/><path d="M1.5 5.5 H14.5 V11.5 H12 V9.5 H4 V11.5 H1.5Z" fill="#ececec"/><path d="M5 10.5 H11 V14 H5Z" fill="#ececec"/><path d="M6 11.5 H10 V13 H6Z" fill="#363636"/></svg>
<svg style="left:147.7px;top:51.0px" width="16" height="16" viewBox="0 0 16 16"><path d="M5 5 V1.5 H9 L12.5 5 V14.5 H5 V11" fill="none" stroke="#ececec" stroke-width="1.5" stroke-linecap="butt" stroke-linejoin="miter"/><path d="M9 1.5 V5 H12.5" fill="none" stroke="#ececec" stroke-width="1.2" stroke-linecap="butt" stroke-linejoin="miter"/><path d="M1 8 H8.5" fill="none" stroke="#ececec" stroke-width="1.5" stroke-linecap="butt" stroke-linejoin="miter"/><path d="M6 5.5 L8.5 8 L6 10.5" fill="none" stroke="#ececec" stroke-width="1.4" stroke-linecap="butt" stroke-linejoin="miter"/></svg>
<svg style="left:178.0px;top:51.0px" width="16" height="16" viewBox="0 0 16 16"><path d="M2.5 14.5 V1.5 H7 L10.5 5 V6" fill="none" stroke="#ececec" stroke-width="1.5" stroke-linecap="butt" stroke-linejoin="miter"/><path d="M7 1.5 V5 H10.5" fill="none" stroke="#ececec" stroke-width="1.2" stroke-linecap="butt" stroke-linejoin="miter"/><path d="M2.5 14.5 H10.5 V11" fill="none" stroke="#ececec" stroke-width="1.5" stroke-linecap="butt" stroke-linejoin="miter"/><path d="M6.5 8.5 H15" fill="none" stroke="#ececec" stroke-width="1.5" stroke-linecap="butt" stroke-linejoin="miter"/><path d="M12.5 6 L15 8.5 L12.5 11" fill="none" stroke="#ececec" stroke-width="1.4" stroke-linecap="butt" stroke-linejoin="miter"/></svg>
<svg style="left:222.0px;top:51.0px" width="16" height="16" viewBox="0 0 16 16"><path d="M3.5 6 H10 C12.5 6 13.5 7.5 13.5 9.5 C13.5 11.5 12.5 13 10 13 H8" fill="none" stroke="#ececec" stroke-width="1.8" stroke-linecap="butt" stroke-linejoin="miter"/><path d="M6.5 2.5 L3 6 L6.5 9.5" fill="none" stroke="#ececec" stroke-width="1.8" stroke-linecap="butt" stroke-linejoin="miter"/></svg>
<svg style="left:253.8px;top:51.0px" width="16" height="16" viewBox="0 0 16 16"><path d="M12.5 6 H6 C3.5 6 2.5 7.5 2.5 9.5 C2.5 11.5 3.5 13 6 13 H8" fill="none" stroke="#ececec" stroke-width="1.8" stroke-linecap="butt" stroke-linejoin="miter"/><path d="M9.5 2.5 L13 6 L9.5 9.5" fill="none" stroke="#ececec" stroke-width="1.8" stroke-linecap="butt" stroke-linejoin="miter"/></svg>
<svg style="left:297.0px;top:51.0px" width="16" height="16" viewBox="0 0 16 16"><path d="M2 2 H9 V9 H2Z" fill="#ececec"/><path d="M6 6 H14 V14 H6Z" fill="#363636"/><path d="M7 7 H13.5 V13.5 H7Z" fill="#ececec"/></svg>
<svg style="left:328.7px;top:51.0px" width="16" height="16" viewBox="0 0 16 16"><path d="M4 4 L13 13 M12.5 3 L4 12" fill="none" stroke="#ececec" stroke-width="1.4" stroke-linecap="butt" stroke-linejoin="miter"/><circle cx="3.8" cy="3.5" r="2" fill="none" stroke="#ececec" stroke-width="1.3"/><circle cx="3.8" cy="12.5" r="2" fill="none" stroke="#ececec" stroke-width="1.3"/></svg>
<svg style="left:359.2px;top:51.0px" width="16" height="16" viewBox="0 0 16 16"><path d="M3 3.5 H13 V14.5 H3Z" fill="none" stroke="#ececec" stroke-width="1.6" stroke-linecap="butt" stroke-linejoin="miter"/><path d="M5.5 1.5 H10.5 V5 H5.5Z" fill="#ececec"/><path d="M5 7 H11 V12 H5Z" fill="#cfcfcf"/></svg>
<svg style="left:403.3px;top:51.0px" width="16" height="16" viewBox="0 0 16 16"><circle cx="7" cy="7" r="5.6" fill="#ececec"/><path d="M4 4.5 H10 M4 7 H10 M4 9.5 H10 M5 3 V11 M7 3 V11 M9 3 V11" stroke="#7a7a7a" stroke-width="0.8"/><path d="M11 11 L14.5 14.5" fill="none" stroke="#ececec" stroke-width="2.2" stroke-linecap="butt" stroke-linejoin="miter"/></svg>
<svg style="left:434.9px;top:51.0px" width="16" height="16" viewBox="0 0 16 16"><circle cx="7" cy="7" r="5.6" fill="#ececec"/><rect x="4.5" y="4.5" width="5" height="5" fill="#111"/><rect x="3.5" y="3.5" width="7" height="7" fill="none" stroke="#6a6a6a"/><path d="M11 11 L14.5 14.5" fill="none" stroke="#ececec" stroke-width="2.2" stroke-linecap="butt" stroke-linejoin="miter"/></svg>
<svg style="left:466.2px;top:51.0px" width="16" height="16" viewBox="0 0 16 16"><circle cx="7" cy="7" r="5.6" fill="#ececec"/><rect x="4.5" y="2.8" width="5" height="8.4" fill="#fafafa" stroke="#1a1a1a" stroke-width="1"/><path d="M11 11 L14.5 14.5" fill="none" stroke="#ececec" stroke-width="2.2" stroke-linecap="butt" stroke-linejoin="miter"/></svg>
<svg style="left:497.8px;top:51.0px" width="16" height="16" viewBox="0 0 16 16"><path d="M5 3.5 H11 V12.5 H5Z" fill="#cfcfcf"/><path d="M4.5 3 H11.5 V13 H4.5Z" fill="none" stroke="#e8e8e8" stroke-width="1" stroke-linecap="butt" stroke-linejoin="miter"/><path d="M2.5 1.5 H4.5 V3.5 H2.5Z M11.5 1.5 H13.5 V3.5 H11.5Z M2.5 12.5 H4.5 V14.5 H2.5Z M11.5 12.5 H13.5 V14.5 H11.5Z" fill="#f0f0f0"/></svg>
<svg style="left:539.7px;top:51.0px" width="16" height="16" viewBox="0 0 16 16"><path d="M1.5 1.5 H9 V9 H1.5Z" fill="#f0f0f0"/><path d="M5.5 5.5 H14.5 V14.5 H5.5Z" fill="#363636"/><path d="M6.5 6.5 H14 V14 H6.5Z" fill="#e0e0e0"/></svg>
<svg style="left:572.2px;top:51.0px" width="16" height="16" viewBox="0 0 16 16"><path d="M1.5 1.5 H8.5 V8.5 H1.5Z" fill="#f0f0f0"/><path d="M5.5 5.5 H14.5 V14.5 H5.5Z" fill="#363636"/><path d="M6.5 6.5 H14 V14 H6.5Z" fill="#e6e6e6"/><path d="M8.5 9.5 H12.5 V13 H8.5Z" fill="#1a1a1a"/><path d="M9.3 9.5 V8.5 C9.3 7.3 11.7 7.3 11.7 8.5 V9.5" fill="none" stroke="#1a1a1a" stroke-width="1" stroke-linecap="butt" stroke-linejoin="miter"/></svg>
<svg style="left:603.8px;top:51.0px" width="16" height="16" viewBox="0 0 16 16"><path d="M1.5 1.5 H8.5 V8.5 H1.5Z" fill="#f0f0f0"/><path d="M5.5 5.5 H14.5 V14.5 H5.5Z" fill="#363636"/><path d="M6.5 6.5 H14 V14 H6.5Z" fill="#e6e6e6"/><path d="M8.5 9.5 H12.5 V13 H8.5Z" fill="#1a1a1a"/><path d="M9.3 9.5 V8.5 C9.3 7.3 11.7 7.3 11.7 8.5 V9.5" fill="none" stroke="#1a1a1a" stroke-width="1" stroke-linecap="butt" stroke-linejoin="miter"/></svg>
<svg style="left:647.3px;top:51.0px" width="16" height="16" viewBox="0 0 16 16"><path d="M1 1 H3.5 V3.5 H1Z M12.5 1 H15 V3.5 H12.5Z M1 12.5 H3.5 V15 H1Z M12.5 12.5 H15 V15 H12.5Z" fill="#f0f0f0"/><circle cx="6.5" cy="7" r="3.2" fill="#e0e0e0"/><path d="M7 8 H12 V12 H7Z" fill="#cfcfcf"/></svg>
<svg style="left:678.9px;top:51.0px" width="16" height="16" viewBox="0 0 16 16"><path d="M1 1 H3.5 V3.5 H1Z M12.5 1 H15 V3.5 H12.5Z M1 12.5 H3.5 V15 H1Z M12.5 12.5 H15 V15 H12.5Z" fill="#c8c8c8"/><circle cx="7" cy="7" r="3.2" fill="#d0d0d0"/><path d="M8 8 H11.5 V11.5 H8Z" fill="#bdbdbd"/></svg>
<svg style="left:720.8px;top:51.0px" width="16" height="16" viewBox="0 0 16 16"><path d="M2 3 V15" fill="none" stroke="#dcdcdc" stroke-width="1.2" stroke-linecap="butt" stroke-linejoin="miter"/><path d="M2 2 H13" fill="none" stroke="#dcdcdc" stroke-width="1.2" stroke-linecap="butt" stroke-linejoin="miter"/><path d="M14 2 L7 11 L5 14.5 L8.3 12.5 L15 3Z" fill="#ececec"/></svg>
<svg style="left:753.2px;top:51.0px" width="16" height="16" viewBox="0 0 16 16"><text x="8" y="14" text-anchor="middle" font-family="Liberation Serif" font-weight="bold" font-size="16" fill="#ececec">T</text></svg>
<svg style="left:784.5px;top:51.0px" width="16" height="16" viewBox="0 0 16 16"><path d="M2 4 C5 2 10 4 14 2.5 L13 5.5 C9 7 5 5 3 6.5Z M2 8 C5 6 10 8 14 6.5 L13 9.5 C9 11 5 9 3 10.5Z M2 12 C5 10 10 12 14 10.5 L13 13.5 C9 15 5 13 3 14.5Z" fill="#ececec"/></svg>
<svg style="left:816.1px;top:51.0px" width="16" height="16" viewBox="0 0 16 16"><path d="M1.5 1.5 H14.5 V14.5 H1.5Z" fill="none" stroke="#ececec" stroke-width="1.2" stroke-linecap="butt" stroke-linejoin="miter"/><path d="M1.5 4 H14.5" fill="none" stroke="#ececec" stroke-width="1" stroke-linecap="butt" stroke-linejoin="miter"/><path d="M6 7 L4 9 L6 11 M10 7 L12 9 L10 11" fill="none" stroke="#ececec" stroke-width="1.1" stroke-linecap="butt" stroke-linejoin="miter"/></svg>
<svg style="left:847.8px;top:51.0px" width="16" height="16" viewBox="0 0 16 16"><path d="M2.5 1 V15" fill="none" stroke="#ececec" stroke-width="1.6" stroke-linecap="butt" stroke-linejoin="miter"/><path d="M4 2.5 H13.5 V5.5 H4Z M4 7 H10 V10 H4Z M4 11.5 H12 V14 H4Z" fill="#ececec"/></svg>
<svg style="left:890.5px;top:51.0px" width="16" height="16" viewBox="0 0 16 16"><path d="M3 14.5 V1.5 H9 L12.5 5 V8" fill="none" stroke="#ececec" stroke-width="1.4" stroke-linecap="butt" stroke-linejoin="miter"/><circle cx="8.5" cy="10" r="3.2" fill="none" stroke="#ececec" stroke-width="1.5"/><path d="M10.5 12 L13.5 15" fill="none" stroke="#ececec" stroke-width="1.8" stroke-linecap="butt" stroke-linejoin="miter"/><path d="M3 14.5 H6" fill="none" stroke="#ececec" stroke-width="1.4" stroke-linecap="butt" stroke-linejoin="miter"/></svg>
<svg style="left:922.9px;top:51.0px" width="16" height="16" viewBox="0 0 16 16"><path d="M2.5 2.5 L13.5 13.5" fill="none" stroke="#ececec" stroke-width="2" stroke-linecap="butt" stroke-linejoin="miter"/><path d="M13.5 2.5 L2.5 13.5" fill="none" stroke="#ececec" stroke-width="2" stroke-linecap="butt" stroke-linejoin="miter"/><path d="M1 4 L4 1 L5.5 2.5 L2.5 5.5Z M11 1.5 A3 3 0 0 1 14.5 5 L12.5 5 L11 3.5Z M1.5 11 A3 3 0 0 0 5 14.5 L5 12.5 L3.5 11Z" fill="#ececec"/></svg>
<svg style="left:8.5px;top:86.5px" width="16" height="16" viewBox="0 0 16 16"><rect x="1.5" y="1.5" width="13.0" height="13.0" fill="none" stroke="#e0e0e0" stroke-width="1" stroke-dasharray="1.2 1"/><path d="M3.5 3.5 H12.5 V7 H3.5Z M3.5 8.5 H7.5 V12.5 H3.5Z M9 8.5 H12.5 V12.5 H9Z" fill="#ececec"/></svg>
<svg style="left:40.7px;top:86.5px" width="16" height="16" viewBox="0 0 16 16"><rect x="1.5" y="1.5" width="13.0" height="13.0" fill="none" stroke="#e0e0e0" stroke-width="1" stroke-dasharray="1.2 1"/><path d="M4 6 C6 3.5 10 4.5 12.5 3.5 L12 5.5 C9.5 6.5 6 5.5 4 7Z M3.5 10 C6 7.5 10 8.5 12.5 7.5 L12 9.5 C9.5 10.5 6 9.5 4 11Z M3.5 13 C6 11.5 9 12 12 11.5 L12 12.5 C9 13 6 12.8 4 13.8Z" fill="#ececec"/></svg>
<svg style="left:72.4px;top:86.5px" width="16" height="16" viewBox="0 0 16 16"><rect x="1.5" y="1.5" width="13.0" height="13.0" fill="none" stroke="#7a7a7a" stroke-width="1" stroke-dasharray="1.2 1"/><circle cx="10" cy="6.5" r="2.8" fill="#8a8a8a"/><path d="M3 13.5 C3.5 9 6 8.5 8 9 V13.5Z" fill="#8a8a8a"/></svg>
<svg style="left:114.6px;top:86.5px" width="16" height="16" viewBox="0 0 16 16"><path d="M13 4 H8.5 C5.5 4 4.5 6 4.5 8.5 V12.5" fill="none" stroke="#ececec" stroke-width="2" stroke-linecap="butt" stroke-linejoin="miter"/><path d="M1.5 9.5 L4.5 13 L7.5 9.5" fill="none" stroke="#ececec" stroke-width="2" stroke-linecap="butt" stroke-linejoin="miter"/></svg>
<svg style="left:148.3px;top:86.5px" width="16" height="16" viewBox="0 0 16 16"><path d="M3 4 H7.5 C10.5 4 11.5 6 11.5 8.5 V12.5" fill="none" stroke="#ececec" stroke-width="2" stroke-linecap="butt" stroke-linejoin="miter"/><path d="M8.5 9.5 L11.5 13 L14.5 9.5" fill="none" stroke="#ececec" stroke-width="2" stroke-linecap="butt" stroke-linejoin="miter"/></svg>
<svg style="left:178.8px;top:86.5px" width="16" height="16" viewBox="0 0 16 16"><path d="M3 8 H13" fill="none" stroke="#ececec" stroke-width="2" stroke-linecap="butt" stroke-linejoin="miter"/><path d="M5.5 4.5 L2 8 L5.5 11.5 M10.5 4.5 L14 8 L10.5 11.5" fill="none" stroke="#ececec" stroke-width="2" stroke-linecap="butt" stroke-linejoin="miter"/></svg>
<svg style="left:210.0px;top:86.5px" width="16" height="16" viewBox="0 0 16 16"><path d="M8 3 V13" fill="none" stroke="#ececec" stroke-width="2" stroke-linecap="butt" stroke-linejoin="miter"/><path d="M4.5 5.5 L8 2 L11.5 5.5 M4.5 10.5 L8 14 L11.5 10.5" fill="none" stroke="#ececec" stroke-width="2" stroke-linecap="butt" stroke-linejoin="miter"/></svg>
<svg style="left:253.2px;top:86.5px" width="16" height="16" viewBox="0 0 16 16"><path d="M1.5 2.5 H6 M1.5 5.5 H6 M1.5 8.5 H6 M1.5 11.5 H6" fill="none" stroke="#ececec" stroke-width="1.6" stroke-linecap="butt" stroke-linejoin="miter"/><path d="M11 1.5 V10" fill="none" stroke="#ececec" stroke-width="1.8" stroke-linecap="butt" stroke-linejoin="miter"/><path d="M8.5 7.5 L11 10.5 L13.5 7.5" fill="none" stroke="#ececec" stroke-width="1.6" stroke-linecap="butt" stroke-linejoin="miter"/><path d="M1.5 14.5 H14.5" fill="none" stroke="#ececec" stroke-width="1.8" stroke-linecap="butt" stroke-linejoin="miter"/></svg>
<svg style="left:284.2px;top:86.5px" width="16" height="16" viewBox="0 0 16 16"><path d="M1.5 3 H7 M1.5 6 H7 M1.5 9 H14 M1.5 12 H7 M1.5 14.5 H5" fill="none" stroke="#ececec" stroke-width="1.6" stroke-linecap="butt" stroke-linejoin="miter"/><path d="M11 1 V6.5" fill="none" stroke="#ececec" stroke-width="1.6" stroke-linecap="butt" stroke-linejoin="miter"/><path d="M9 4.5 L11 6.5 L13 4.5" fill="none" stroke="#ececec" stroke-width="1.4" stroke-linecap="butt" stroke-linejoin="miter"/></svg>
<svg style="left:316.0px;top:86.5px" width="16" height="16" viewBox="0 0 16 16"><path d="M1.5 3 H7 M1.5 6 H14 M1.5 9 H7 M1.5 12 H7 M1.5 14.5 H5" fill="none" stroke="#ececec" stroke-width="1.6" stroke-linecap="butt" stroke-linejoin="miter"/><path d="M11 9 V15" fill="none" stroke="#ececec" stroke-width="1.6" stroke-linecap="butt" stroke-linejoin="miter"/><path d="M9 11 L11 9 L13 11" fill="none" stroke="#ececec" stroke-width="1.4" stroke-linecap="butt" stroke-linejoin="miter"/></svg>
<svg style="left:347.8px;top:86.5px" width="16" height="16" viewBox="0 0 16 16"><path d="M1.5 1.5 H14.5" fill="none" stroke="#ececec" stroke-width="1.8" stroke-linecap="butt" stroke-linejoin="miter"/><path d="M1.5 5 H6 M1.5 8 H6 M1.5 11 H6 M1.5 14 H6" fill="none" stroke="#ececec" stroke-width="1.6" stroke-linecap="butt" stroke-linejoin="miter"/><path d="M11 5 V15" fill="none" stroke="#ececec" stroke-width="1.8" stroke-linecap="butt" stroke-linejoin="miter"/><path d="M8.5 7.5 L11 4.5 L13.5 7.5" fill="none" stroke="#ececec" stroke-width="1.6" stroke-linecap="butt" stroke-linejoin="miter"/></svg>
<div style="left:386px;top:84.50px;height:20px;line-height:20px;font-size:11px;color:#b4b4b4;font-weight:normal;white-space:nowrap;transform:scaleX(0.89);transform-origin:0 50%;">X:</div>
<div style="left:398px;top:80px;width:98px;height:28px;background:#2e2e2e;border:1px solid #292929;border-radius:3px;box-shadow:0 1px 0 #262626;"></div>
<div style="left:400.5px;top:84.50px;height:20px;line-height:20px;font-size:11.5px;color:#e8e8e8;font-weight:normal;white-space:nowrap;transform:scaleX(0.89);transform-origin:0 50%;">231.476</div>
<div style="left:468px;top:93.75px;width:10px;height:1.5px;background:#e6e6e6;"></div>
<div style="left:483px;top:93.75px;width:10px;height:1.5px;background:#e6e6e6;"></div>
<div style="left:487.25px;top:89.5px;width:1.5px;height:10px;background:#e6e6e6;"></div>
<div style="left:503px;top:84.50px;height:20px;line-height:20px;font-size:11px;color:#b4b4b4;font-weight:normal;white-space:nowrap;transform:scaleX(0.89);transform-origin:0 50%;">Y:</div>
<div style="left:513.5px;top:80px;width:98.0px;height:28px;background:#2e2e2e;border:1px solid #292929;border-radius:3px;box-shadow:0 1px 0 #262626;"></div>
<div style="left:516.0px;top:84.50px;height:20px;line-height:20px;font-size:11.5px;color:#e8e8e8;font-weight:normal;white-space:nowrap;transform:scaleX(0.89);transform-origin:0 50%;">231.476</div>
<div style="left:583.5px;top:93.75px;width:10px;height:1.5px;background:#e6e6e6;"></div>
<div style="left:598.5px;top:93.75px;width:10px;height:1.5px;background:#e6e6e6;"></div>
<div style="left:602.75px;top:89.5px;width:1.5px;height:10px;background:#e6e6e6;"></div>
<div style="left:619px;top:84.50px;height:20px;line-height:20px;font-size:11px;color:#b4b4b4;font-weight:normal;white-space:nowrap;transform:scaleX(0.89);transform-origin:0 50%;">W:</div>
<div style="left:632.5px;top:80px;width:94.5px;height:28px;background:#2e2e2e;border:1px solid #292929;border-radius:3px;box-shadow:0 1px 0 #262626;"></div>
<div style="left:635.0px;top:84.50px;height:20px;line-height:20px;font-size:11.5px;color:#e8e8e8;font-weight:normal;white-space:nowrap;transform:scaleX(0.89);transform-origin:0 50%;">537.049</div>
<div style="left:699px;top:93.75px;width:10px;height:1.5px;background:#e6e6e6;"></div>
<div style="left:714px;top:93.75px;width:10px;height:1.5px;background:#e6e6e6;"></div>
<div style="left:718.25px;top:89.5px;width:1.5px;height:10px;background:#e6e6e6;"></div>
<div style="left:766px;top:84.50px;height:20px;line-height:20px;font-size:11px;color:#b4b4b4;font-weight:normal;white-space:nowrap;transform:scaleX(0.89);transform-origin:0 50%;">H:</div>
<div style="left:778px;top:80px;width:94px;height:28px;background:#2e2e2e;border:1px solid #292929;border-radius:3px;box-shadow:0 1px 0 #262626;"></div>
<div style="left:780.5px;top:84.50px;height:20px;line-height:20px;font-size:11.5px;color:#e8e8e8;font-weight:normal;white-space:nowrap;transform:scaleX(0.89);transform-origin:0 50%;">537.049</div>
<div style="left:844px;top:93.75px;width:10px;height:1.5px;background:#e6e6e6;"></div>
<div style="left:859px;top:93.75px;width:10px;height:1.5px;background:#e6e6e6;"></div>
<div style="left:863.25px;top:89.5px;width:1.5px;height:10px;background:#e6e6e6;"></div>
<svg style="left:738.8px;top:87.0px" width="16" height="16" viewBox="0 0 16 16"><path d="M1.5 8 H9.5 V14.5 H1.5Z" fill="#ececec"/><path d="M7.5 8 V5.5 A2.8 2.8 0 0 1 13 5.5 V7" fill="none" stroke="#ececec" stroke-width="1.6" stroke-linecap="butt" stroke-linejoin="miter"/></svg>
<div style="left:877.5px;top:80px;width:51px;height:28px;background:#333333;border:1px solid #2a2a2a;border-radius:3px;box-shadow:0 1px 0 #262626;"></div>
<div style="left:887px;top:84.50px;height:20px;line-height:20px;font-size:11px;color:#9a9a9a;font-weight:normal;white-space:nowrap;transform:scaleX(0.89);transform-origin:0 50%;">px</div>
<svg style="left:909px;top:92.0px;" width="9" height="5" viewBox="0 0 9 5"><path d="M0.5 0.5 H8.5 L4.5 4.5Z" fill="#e6e6e6"/></svg>
<div style="left:943px;top:80.5px;width:30px;height:28.5px;background:#232323;border-radius:4px;"></div>
<div style="left:974px;top:80.5px;width:30px;height:28.5px;background:#232323;border-radius:4px;"></div>
<div style="left:1005px;top:80.5px;width:30px;height:28.5px;background:#232323;border-radius:4px;"></div>
<div style="left:1037px;top:80.5px;width:30px;height:28.5px;background:#232323;border-radius:4px;"></div>
<svg style="left:949.5px;top:86.5px" width="16" height="16" viewBox="0 0 16 16"><path d="M2.5 3 H11 V9.5" fill="none" stroke="#ececec" stroke-width="1.4" stroke-linecap="butt" stroke-linejoin="miter"/><path d="M5 6 H8.5 V9.5" fill="none" stroke="#ececec" stroke-width="1.2" stroke-linecap="butt" stroke-linejoin="miter"/><path d="M1.5 13 H2.5 M4 13 H5" fill="none" stroke="#ececec" stroke-width="1.4" stroke-linecap="butt" stroke-linejoin="miter"/><path d="M6.5 13 H12" fill="none" stroke="#ececec" stroke-width="1.6" stroke-linecap="butt" stroke-linejoin="miter"/><path d="M11 10.5 L14.5 13 L11 15.5Z" fill="#ececec"/></svg>
<svg style="left:980.5px;top:86.5px" width="16" height="16" viewBox="0 0 16 16"><path d="M2.5 3 H7 C10 3 11 5 11 8 V9.5" fill="none" stroke="#ececec" stroke-width="1.4" stroke-linecap="butt" stroke-linejoin="miter"/><path d="M5 6 H7 C8 6 8.5 7 8.5 8 V9.5" fill="none" stroke="#ececec" stroke-width="1.2" stroke-linecap="butt" stroke-linejoin="miter"/><path d="M1.5 13 H2.5 M4 13 H5" fill="none" stroke="#ececec" stroke-width="1.4" stroke-linecap="butt" stroke-linejoin="miter"/><path d="M6.5 13 H12" fill="none" stroke="#ececec" stroke-width="1.6" stroke-linecap="butt" stroke-linejoin="miter"/><path d="M11 10.5 L14.5 13 L11 15.5Z" fill="#ececec"/></svg>
<svg style="left:1012.0px;top:86.5px" width="16" height="16" viewBox="0 0 16 16"><path d="M2.5 2.5 H13.5 V9.5 H2.5Z" fill="none" stroke="#ececec" stroke-width="1" stroke-linecap="butt" stroke-linejoin="miter"/><path d="M3.5 4 H12.5 M3.5 6 H12.5 M3.5 8 H12.5" stroke="#e0e0e0" stroke-width="0.8"/><path d="M9.5 3 H13 V6 H9.5Z" fill="#ececec"/><path d="M1.5 13 H2.5 M4 13 H5" fill="none" stroke="#ececec" stroke-width="1.4" stroke-linecap="butt" stroke-linejoin="miter"/><path d="M6.5 13 H12" fill="none" stroke="#ececec" stroke-width="1.6" stroke-linecap="butt" stroke-linejoin="miter"/><path d="M11 10.5 L14.5 13 L11 15.5Z" fill="#ececec"/></svg>
<svg style="left:1044.0px;top:86.5px" width="16" height="16" viewBox="0 0 16 16"><path d="M2.5 2.5 H13.5 V9.5 H2.5Z" fill="none" stroke="#ececec" stroke-width="1" stroke-linecap="butt" stroke-linejoin="miter"/><path d="M3.5 4 H12.5 M3.5 6 H12.5 M3.5 8 H12.5" stroke="#e0e0e0" stroke-width="0.8"/><path d="M1.5 13 H2.5 M4 13 H5" fill="none" stroke="#ececec" stroke-width="1.4" stroke-linecap="butt" stroke-linejoin="miter"/><path d="M6.5 13 H12" fill="none" stroke="#ececec" stroke-width="1.6" stroke-linecap="butt" stroke-linejoin="miter"/><path d="M11 10.5 L14.5 13 L11 15.5Z" fill="#ececec"/></svg>
<div style="left:3px;top:116px;width:29px;height:21px;background:#222222;border-radius:4px;"></div>
<div style="left:4px;top:165px;width:28px;height:1px;background:#393939;"></div>
<div style="left:4px;top:288px;width:28px;height:1px;background:#393939;"></div>
<div style="left:4px;top:388px;width:28px;height:1px;background:#393939;"></div>
<div style="left:4px;top:489px;width:28px;height:1px;background:#393939;"></div>
<div style="left:4px;top:589px;width:28px;height:1px;background:#393939;"></div>
<svg style="left:9.0px;top:118.0px" width="16" height="16" viewBox="0 0 16 16"><path d="M4 1.5 L4 13 L7 10.2 L9.3 14.5 L11.3 13.5 L9 9.3 L13 9Z" fill="#ececec"/></svg>
<svg style="left:9.0px;top:140.0px" width="16" height="16" viewBox="0 0 16 16"><path d="M3 13.5 C3 8 5 4 10.5 2.5" fill="none" stroke="#ececec" stroke-width="1.3"/><path d="M7 6 L13.5 12.5 L9.5 13 Z" fill="#ececec"/><circle cx="3" cy="13.5" r="1.5" fill="#ececec"/><circle cx="11.5" cy="2.5" r="1.5" fill="#ececec"/></svg>
<svg style="left:9.0px;top:174.0px" width="16" height="16" viewBox="0 0 16 16"><path d="M2.5 2.5 H13.5 V13.5 H2.5Z" fill="none" stroke="#ececec" stroke-width="1.6"/></svg>
<svg style="left:9.0px;top:196.0px" width="16" height="16" viewBox="0 0 16 16"><circle cx="8" cy="8" r="6" fill="none" stroke="#ececec" stroke-width="1.5"/></svg>
<svg style="left:9.0px;top:219.0px" width="16" height="16" viewBox="0 0 16 16"><path d="M7 1.5 L9.5 5.5 L14 6 L10.5 9 L11.5 14 L7.5 11.5 L3 13 L4 8.5 L1.5 5.5 L5 5Z" fill="none" stroke="#ececec" stroke-width="1.3"/></svg>
<svg style="left:9.0px;top:240.5px" width="16" height="16" viewBox="0 0 16 16"><path d="M8 1.5 L14 4.5 L14 11.5 L8 14.5 L2 11.5 L2 4.5Z" fill="#9a9a9a"/><path d="M8 1.5 L14 4.5 L8 7.5 L2 4.5Z" fill="#f4f4f4"/><path d="M2 4.5 L8 7.5 L8 14.5 L2 11.5Z" fill="#d8d8d8"/></svg>
<svg style="left:9.0px;top:263.0px" width="16" height="16" viewBox="0 0 16 16"><path d="M8 8 C8 6.8 9.6 6.8 9.6 8.2 C9.6 10.4 6.2 10.4 6.2 7.8 C6.2 4.6 11.4 4.6 11.4 8.4 C11.4 12.6 4.4 12.6 4.4 7.8 C4.4 2.6 13.4 2.2 13.4 8.6 C13.4 13.4 9.5 15 6.5 14.8" fill="none" stroke="#ececec" stroke-width="1.5"/></svg>
<svg style="left:9.0px;top:295.7px" width="16" height="16" viewBox="0 0 16 16"><path d="M2 3 C5 2 6 5 4 8 C2 11 3 14 6 13" fill="none" stroke="#ececec" stroke-width="1.2"/><path d="M8 9 L13 2 C14.5 1.5 15.5 3 14.5 4 L9.5 11Z" fill="#ececec"/><circle cx="2.5" cy="3" r="1.2" fill="#ececec"/><circle cx="6" cy="13" r="1.2" fill="#ececec"/></svg>
<svg style="left:9.0px;top:318.8px" width="16" height="16" viewBox="0 0 16 16"><path d="M4 13 L12 4 L14 6 L6 15 L3.5 15.5Z" fill="#ececec"/><path d="M3 5 C2 3 4 1.5 5.5 3 C7 4.5 5 7 3 6" fill="none" stroke="#ececec" stroke-width="1.1"/></svg>
<svg style="left:9.0px;top:339.4px" width="16" height="16" viewBox="0 0 16 16"><path d="M3 14 C1 10 4 4 6 3 C7 5 5 9 4 12" fill="none" stroke="#ececec" stroke-width="1.3"/><path d="M6 12 C7 8 10 5 14 3 C13 7 11 11 7 13Z" fill="#ececec"/></svg>
<svg style="left:9.0px;top:363.2px" width="16" height="16" viewBox="0 0 16 16"><text x="0.5" y="14" font-family="Liberation Sans" font-weight="bold" font-size="14" fill="#ececec">A</text><path d="M11.5 2 H13.5 V14 H11.5Z" fill="#ececec"/></svg>
<svg style="left:9.0px;top:397.0px" width="16" height="16" viewBox="0 0 16 16"><path d="M1.5 2 H14.5 V14 H1.5Z" fill="#9a9a9a"/><defs><linearGradient id="ltg" x1="0" y1="0" x2="1" y2="1"><stop offset="0" stop-color="#fafafa"/><stop offset="1" stop-color="#555"/></linearGradient></defs><path d="M2 2.5 H14 V13.5 H2Z" fill="url(#ltg)"/><path d="M3 3.5 L13 12.5" fill="none" stroke="#333" stroke-width="1.2"/></svg>
<svg style="left:9.0px;top:419.2px" width="16" height="16" viewBox="0 0 16 16"><path d="M3 3 H13 V13 H3Z" fill="#777"/><path d="M3 3 H13 V13 H3Z" fill="none" stroke="#bbb" stroke-width="1"/><path d="M1 1 H4.5 V4.5 H1Z M11.5 1 H15 V4.5 H11.5Z M1 11.5 H4.5 V15 H1Z M11.5 11.5 H15 V15 H11.5Z" fill="#ececec"/></svg>
<svg style="left:9.0px;top:441.3px" width="16" height="16" viewBox="0 0 16 16"><path d="M3 14 L9.5 7" fill="none" stroke="#ececec" stroke-width="1.5"/><path d="M8 5 L11 8 L9.5 9.5 L6.5 6.5Z M10 4 L12.5 1.5 C13.5 0.5 15.5 2.5 14.5 3.5 L12 6Z" fill="#ececec"/></svg>
<svg style="left:9.0px;top:463.4px" width="16" height="16" viewBox="0 0 16 16"><path d="M2 8 L6 5 L6 1 H9.5 V6 L14 9.5 L9.5 14.5 Q6 15 3 12.5Z" fill="#ececec"/><path d="M6.5 1 H9 V9 H6.5Z" fill="#363636"/><path d="M7 1.5 H8.5 V8.5 H7Z" fill="#ececec"/></svg>
<svg style="left:9.0px;top:497.4px" width="16" height="16" viewBox="0 0 16 16"><path d="M1.5 13.5 C1.5 9 4 6 7 5.5 C7 8.5 9 10 12 8.5 C13 8 14 8.5 14.5 9.5 L14.5 13.5Z" fill="#ececec"/></svg>
<svg style="left:9.0px;top:519.5px" width="16" height="16" viewBox="0 0 16 16"><path d="M9 6 C9 4 13 4 13 6 L14 14.5 H8Z" fill="#ececec"/><path d="M10 2.5 H12 V4.5 H10Z" fill="#ececec"/><g fill="#bbb"><circle cx="2" cy="4" r="0.8"/><circle cx="4" cy="5" r="0.8"/><circle cx="2.5" cy="7" r="0.8"/><circle cx="5" cy="8" r="0.8"/></g></svg>
<svg style="left:9.0px;top:541.6px" width="16" height="16" viewBox="0 0 16 16"><path d="M4 9 L9.5 3.5 L13 7 L7.5 12.5Z" fill="#ececec"/><path d="M4 9 L6 7 L9.5 10.5 L7.5 12.5Z" fill="#9a9a9a"/><path d="M1.5 14.5 H14.5" fill="none" stroke="#ececec" stroke-width="1.2"/></svg>
<svg style="left:9.0px;top:563.7px" width="16" height="16" viewBox="0 0 16 16"><path d="M5.5 1.5 H10.5 V6.5 H5.5Z M1 10 H6 V15 H1Z M10 10 H15 V15 H10Z" fill="#ececec"/><path d="M8 6.5 V8.5 H3.5 V10 M8 8.5 H12.5 V10" fill="none" stroke="#ececec" stroke-width="1.2"/></svg>
<svg style="left:9.0px;top:597.7px" width="16" height="16" viewBox="0 0 16 16"><circle cx="6.8" cy="6.8" r="5" fill="none" stroke="#ececec" stroke-width="1.6"/><path d="M10.5 10.5 L14.5 14.5" fill="none" stroke="#ececec" stroke-width="2.2"/></svg>
<svg style="left:9.0px;top:619.8px" width="16" height="16" viewBox="0 0 16 16"><path d="M4.5 1.5 H11.5 V14.5 H4.5Z" fill="none" stroke="#ececec" stroke-width="1.4"/><path d="M4.5 4 H7 M4.5 6.5 H8 M4.5 9 H7 M4.5 11.5 H8" fill="none" stroke="#ececec" stroke-width="1"/></svg>
<div style="left:1540px;top:116px;width:30px;height:28.5px;background:#232323;border-radius:4px;"></div>
<svg style="left:1547.0px;top:122.2px" width="16" height="16" viewBox="0 0 16 16"><path d="M6.5 3.5 H8.5 A4.5 4.5 0 0 1 8.5 12.5 H6.5" fill="none" stroke="#ececec" stroke-width="2.2" stroke-dasharray="2.2 1"/><path d="M5 2.3 H7 V4.7 H5Z M5 11.3 H7 V13.7 H5Z" fill="#ececec"/><text x="2" y="10.5" font-size="6.5" font-family="Liberation Sans" font-weight="bold" fill="#ececec">$</text></svg>
<div style="left:1540px;top:158px;width:30px;height:27.5px;background:#232323;border-radius:4px;"></div>
<svg style="left:1547.0px;top:163.8px" width="16" height="16" viewBox="0 0 16 16"><path d="M6.5 3.5 H8.5 A4.5 4.5 0 0 1 8.5 12.5 H6.5" fill="none" stroke="#ececec" stroke-width="2.2" stroke-dasharray="2.2 1"/><path d="M5 2.3 H7 V4.7 H5Z M5 11.3 H7 V13.7 H5Z" fill="#ececec"/><text x="2" y="10.5" font-size="6.5" font-family="Liberation Sans" font-weight="bold" fill="#ececec">$</text></svg>
<div style="left:1540px;top:188px;width:30px;height:27.5px;background:#232323;border-radius:4px;"></div>
<svg style="left:1547.0px;top:193.8px" width="16" height="16" viewBox="0 0 16 16"><path d="M3 13.5 V3 H13.5" fill="none" stroke="#ececec" stroke-width="1.6" stroke-dasharray="2 1.2"/><path d="M8 3.5 H13.5 V4.5 H8Z" fill="#ececec"/><path d="M8.5 7.5 L11 5 L13.5 7.5Z" fill="#ececec"/><path d="M7 8.5 L4.5 11 L7 13.5Z" fill="#ececec"/></svg>
<div style="left:1540px;top:218px;width:30px;height:27.5px;background:#232323;border-radius:4px;"></div>
<svg style="left:1547.0px;top:223.8px" width="16" height="16" viewBox="0 0 16 16"><path d="M12.5 2 V14 M2 12.5 H14" fill="none" stroke="#ececec" stroke-width="1.6" stroke-dasharray="2 1.2"/><path d="M4 12 L10 6.5 V12Z" fill="#ececec"/><circle cx="12.5" cy="12.5" r="1.3" fill="#ececec"/></svg>
<div style="left:1540px;top:248px;width:30px;height:27.5px;background:#232323;border-radius:4px;"></div>
<svg style="left:1547.0px;top:253.8px" width="16" height="16" viewBox="0 0 16 16"><path d="M7 2.5 H13.5 V13.5 H7" fill="none" stroke="#ececec" stroke-width="1.6" stroke-dasharray="2 1.2"/><path d="M4 3.5 V12.5" fill="none" stroke="#ececec" stroke-width="1.6"/><path d="M1.5 4.5 L4 1.5 L6.5 4.5Z M1.5 11.5 L4 14.5 L6.5 11.5Z" fill="#ececec"/><path d="M6 8 H10" fill="none" stroke="#ececec" stroke-width="1.4"/><path d="M9 5.5 L12 8 L9 10.5Z" fill="#ececec"/></svg>
<div style="left:1540px;top:278px;width:30px;height:27.5px;background:#232323;border-radius:4px;"></div>
<svg style="left:1547.0px;top:283.8px" width="16" height="16" viewBox="0 0 16 16"><path d="M2.5 2.5 H13.5 V13.5 H2.5Z" fill="none" stroke="#ececec" stroke-width="1.6" stroke-dasharray="2 1.2"/><path d="M8 4.5 V11.5 M4.5 8 H11.5" fill="none" stroke="#ececec" stroke-width="1.6"/></svg>
<div style="left:1540px;top:318.5px;width:30px;height:27.5px;background:#232323;border-radius:4px;"></div>
<svg style="left:1547.0px;top:324.2px" width="16" height="16" viewBox="0 0 16 16"><path d="M6.5 3.5 H8.5 A4.5 4.5 0 0 1 8.5 12.5 H6.5" fill="none" stroke="#ececec" stroke-width="2.2" stroke-dasharray="2.2 1"/><path d="M5 2.3 H7 V4.7 H5Z M5 11.3 H7 V13.7 H5Z" fill="#ececec"/><text x="2" y="10.5" font-size="6.5" font-family="Liberation Sans" font-weight="bold" fill="#ececec">$</text></svg>
<div style="left:1540px;top:348.5px;width:30px;height:27.5px;background:#232323;border-radius:4px;"></div>
<svg style="left:1547.0px;top:354.2px" width="16" height="16" viewBox="0 0 16 16"><path d="M2.5 13 C2.5 7 5 4.5 8 4.5 C11 4.5 13.5 7 13.5 13" fill="none" stroke="#ececec" stroke-width="1.4"/><path d="M6.5 3 H9.5 V6 H6.5Z" fill="#ececec"/><circle cx="3" cy="3.5" r="1" fill="#ececec"/><circle cx="13" cy="3.5" r="1" fill="#ececec"/></svg>
<div style="left:1540px;top:378px;width:30px;height:28px;background:#232323;border-radius:4px;"></div>
<svg style="left:1547.0px;top:384.0px" width="16" height="16" viewBox="0 0 16 16"><path d="M2 13 L14 3" fill="none" stroke="#ececec" stroke-width="1.3"/><circle cx="8" cy="8" r="2.2" fill="#ececec"/><path d="M3 9.5 L13 6.5" fill="none" stroke="#ececec" stroke-width="1.1"/></svg>
<div style="left:1540px;top:408px;width:30px;height:27.5px;background:#232323;border-radius:4px;"></div>
<svg style="left:1547.0px;top:413.8px" width="16" height="16" viewBox="0 0 16 16"><path d="M2.5 2.5 C7 3 11 6 10 11" fill="none" stroke="#ececec" stroke-width="1.4"/><circle cx="7.5" cy="12" r="2.3" fill="#ececec"/></svg>
<div style="left:1540px;top:438px;width:30px;height:27px;background:#232323;border-radius:4px;"></div>
<svg style="left:1547.0px;top:443.5px" width="16" height="16" viewBox="0 0 16 16"><path d="M2.5 13.5 C2.5 8 5 5.5 8 5.5 C11 5.5 13.5 8 13.5 13.5" fill="none" stroke="#ececec" stroke-width="1.4"/><circle cx="8" cy="4.5" r="1.6" fill="#ececec"/></svg>
<div style="left:1540px;top:467.5px;width:30px;height:28.0px;background:#232323;border-radius:4px;"></div>
<svg style="left:1547.0px;top:473.5px" width="16" height="16" viewBox="0 0 16 16"><path d="M5 2 V14" fill="none" stroke="#ececec" stroke-width="1.5"/><path d="M3 4.5 L5 1.5 L7 4.5Z M3 11.5 L5 14.5 L7 11.5Z M1 8 L4 6 V10Z" fill="#ececec"/><path d="M11 1 V15" fill="none" stroke="#ececec" stroke-width="1.2"/><circle cx="11" cy="8" r="2" fill="#ececec"/></svg>
<div style="left:1540px;top:509px;width:30px;height:27.5px;background:#232323;border-radius:4px;"></div>
<svg style="left:1547.0px;top:514.8px" width="16" height="16" viewBox="0 0 16 16"><path d="M6.5 3.5 H8.5 A4.5 4.5 0 0 1 8.5 12.5 H6.5" fill="none" stroke="#ececec" stroke-width="2.2" stroke-dasharray="2.2 1"/><path d="M5 2.3 H7 V4.7 H5Z M5 11.3 H7 V13.7 H5Z" fill="#ececec"/><text x="2" y="10.5" font-size="6.5" font-family="Liberation Sans" font-weight="bold" fill="#ececec">$</text></svg>
<div style="left:1540px;top:539px;width:30px;height:27.5px;background:#232323;border-radius:4px;"></div>
<svg style="left:1547.0px;top:544.8px" width="16" height="16" viewBox="0 0 16 16"><path d="M3 3 H7 V7 H3Z M9 3 H13 V7 H9Z M3 9 H7 V13 H3Z M9 9 H13 V13 H9Z" fill="#ececec"/><path d="M8 1 V15 M1 8 H15" fill="none" stroke="#ececec" stroke-width="1"/></svg>
<div style="left:1540px;top:569px;width:30px;height:27.5px;background:#232323;border-radius:4px;"></div>
<svg style="left:1547.0px;top:574.8px" width="16" height="16" viewBox="0 0 16 16"><path d="M8 6 V15 M3 11 H13" fill="none" stroke="#ececec" stroke-width="1"/><path d="M5 9 H7 V10 H5Z M9 9 H11 V10 H9Z M5 12 H7 V13 H5Z M9 12 H11 V13 H9Z" fill="#ececec"/><path d="M4.5 6 C4 2 10 1.5 10.5 5" fill="none" stroke="#ececec" stroke-width="1.5"/><path d="M3 5 L6 5 L4.5 8Z" fill="#ececec"/></svg>
<svg style="left:1547.0px;top:604.8px" width="16" height="16" viewBox="0 0 16 16"><text x="8.5" y="11" text-anchor="middle" font-family="Liberation Sans" font-weight="bold" font-size="12" fill="#ececec">A</text><path d="M4 13.5 H14" fill="none" stroke="#ececec" stroke-width="1.2"/><path d="M1 13.5 L4 11.5 V15.5Z" fill="#ececec"/></svg>
<div style="left:1540px;top:640px;width:30px;height:27.5px;background:#232323;border-radius:4px;"></div>
<svg style="left:1547.0px;top:645.8px" width="16" height="16" viewBox="0 0 16 16"><path d="M3 2.5 H13 V13.5 H3Z" fill="none" stroke="#ececec" stroke-width="1.5"/></svg>
<div style="left:1540px;top:670px;width:30px;height:27.5px;background:#232323;border-radius:4px;"></div>
<svg style="left:1547.0px;top:675.8px" width="16" height="16" viewBox="0 0 16 16"><path d="M2.5 2.5 H13.5 V13.5 H2.5Z M2.5 5.5 H13.5 M2.5 8 H13.5 M2.5 10.7 H13.5 M5.3 2.5 V13.5 M8 2.5 V13.5 M10.7 2.5 V13.5" fill="none" stroke="#ececec" stroke-width="1.1"/></svg>
<div style="left:1540px;top:700px;width:30px;height:28px;background:#232323;border-radius:4px;"></div>
<svg style="left:1547.0px;top:706.0px" width="16" height="16" viewBox="0 0 16 16"><path d="M5 2 V12 H14" fill="none" stroke="#ececec" stroke-width="1.2"/></svg>
</body></html>
